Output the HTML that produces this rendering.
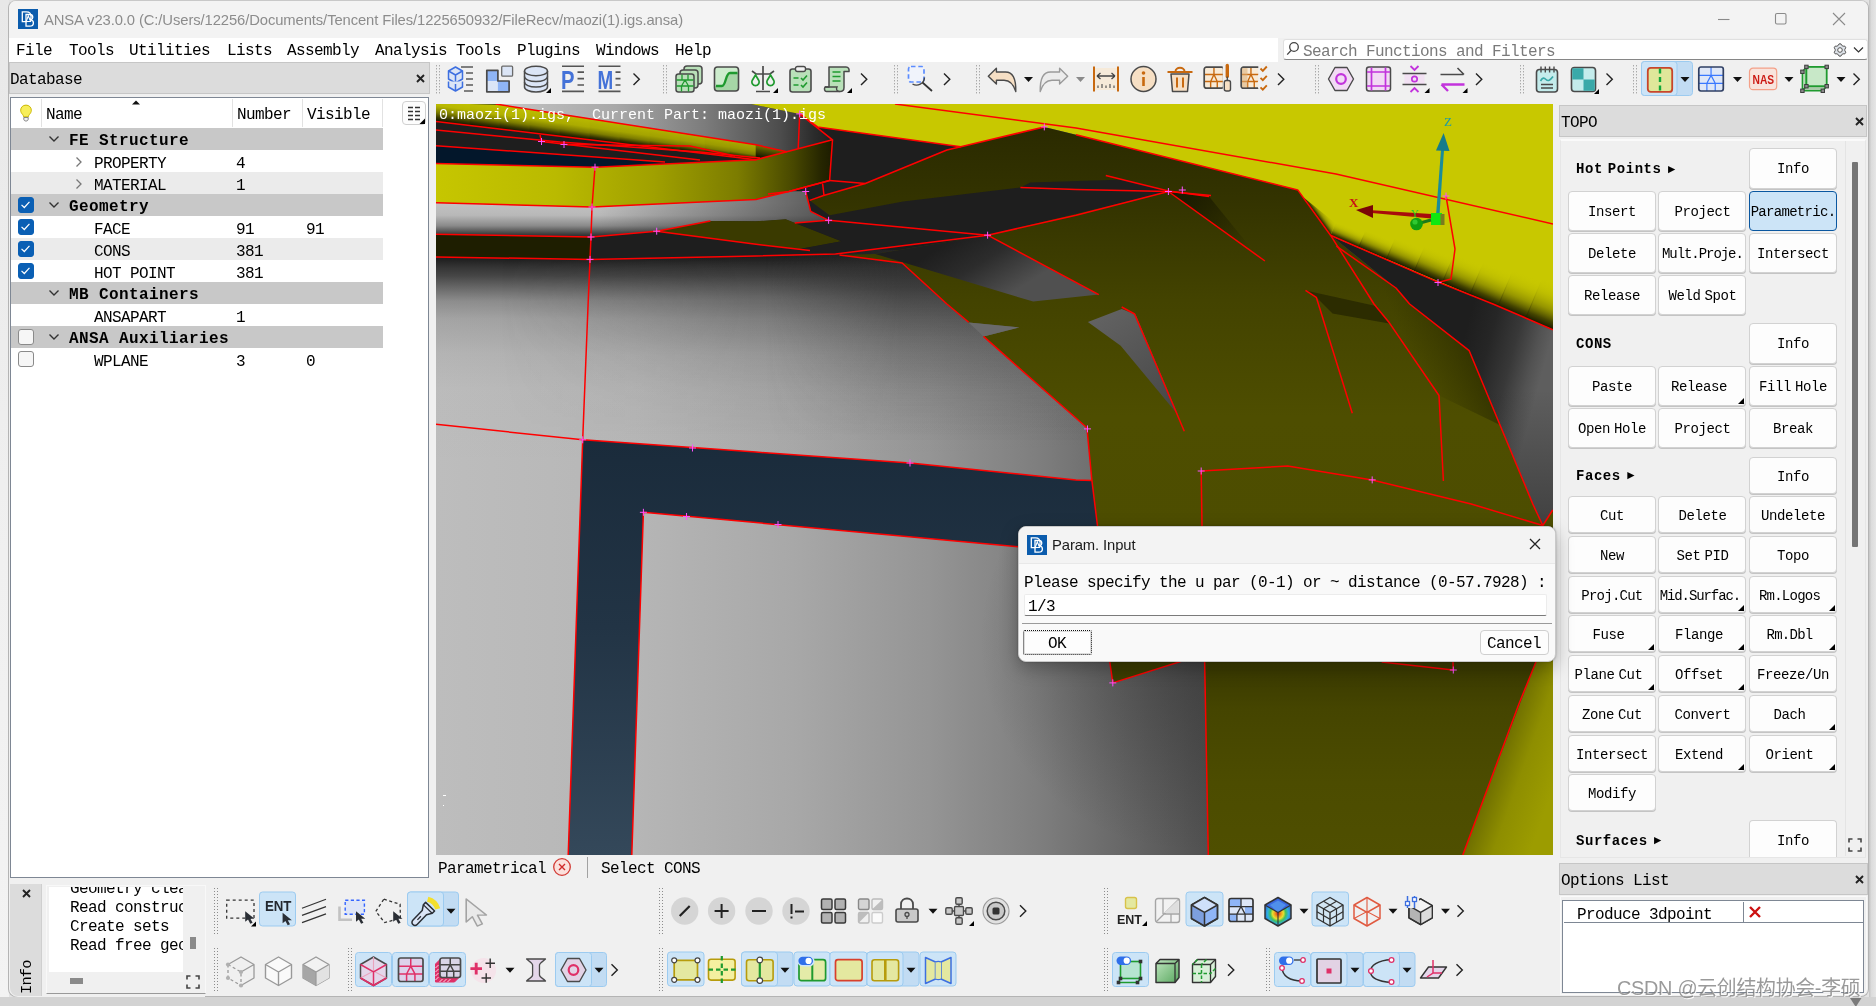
<!DOCTYPE html>
<html><head><meta charset="utf-8"><title>ANSA</title>
<style>
html,body{margin:0;padding:0}
body{width:1876px;height:1006px;overflow:hidden;position:relative;background:#e3e3e3;font-family:"Liberation Mono",monospace;}

.a{position:absolute;box-sizing:border-box}
.t{position:absolute;white-space:pre;color:#000;font-family:"Liberation Mono",monospace}
.m18{font-size:16px;line-height:20px;letter-spacing:-0.6px}
.m16{font-size:14px;line-height:18px;letter-spacing:-0.4px}
.b18{font-size:16px;line-height:20px;letter-spacing:0.4px;font-weight:bold}
.b16{font-size:14px;line-height:18px;letter-spacing:0.55px;font-weight:bold}
.sans{font-family:"Liberation Sans",sans-serif}
.btn{position:absolute;box-sizing:border-box;background:#fdfdfd;border:1px solid #d2d2d2;border-radius:4px;
 text-align:center;white-space:pre;font-family:"Liberation Mono",monospace;font-size:14px;letter-spacing:-0.4px;word-spacing:-4px;color:#000;
 box-shadow:0 1px 0 #c4c4c4}
.hl{position:absolute;box-sizing:border-box;background:#cce4f7;border:1px solid #99c9ef;border-radius:3px}
.cb{position:absolute;box-sizing:border-box;width:16px;height:16px;border-radius:3px}
.cbon{background:#0a5fb4;border:1px solid #0a5fb4}
.cboff{background:#f6f6f6;border:1px solid #8a8a8a}

</style></head><body><div id="root" style="position:absolute;left:0;top:0;width:1876px;height:1006px;will-change:transform">
<div class="a" style="left:0px;top:0px;width:1876px;height:1006px;background:#e3e3e3"></div><div class="a" style="left:0px;top:0px;width:9px;height:1006px;background:linear-gradient(#e8e8e8,#f0f0f0 55%,#f3f3f3)"></div><div class="a" style="left:1869px;top:0px;width:7px;height:1006px;background:linear-gradient(to right,#c4c4c4,#dcdcdc 35%,#e6e6e6)"></div><div class="a" style="left:0px;top:997px;width:1876px;height:9px;background:#d3d3d3"></div><svg class="a" style="left:1849px;top:998px" width="14" height="8"><path d="M1 0h11.5L6.800 9z" fill="#7a7a7a"/></svg><div class="a" style="left:8px;top:0px;width:1861px;height:997px;background:#f0f0f0;border:1px solid #b4b4b4;border-top-color:#c8c8c8;border-radius:8px"></div><div class="a" style="left:9px;top:1px;width:1859px;height:37px;background:#f3f3f3;border-radius:7px 7px 0 0"></div><svg class="a" style="left:18px;top:9px" width="20" height="20" viewBox="0 0 20 20"><rect width="20" height="20" fill="#0b5cad"/><path d="M4.3 2.8h4.2c3 0 4.6 2 4.6 5 0 3.200-1.800 4.800-4.600 4.800H4.300z" fill="none" stroke="#fff" stroke-width="1.3"/><path d="M8 5.5h3.600c2 0 3.200 1 3.200 2.800 0 1.400-.8 2.300-2 2.600 1.600.3 2.600 1.300 2.600 3 0 2-1.500 3.200-3.800 3.200H8z" fill="none" stroke="#fff" stroke-width="1.3"/><path d="M8.200 12.500L10.300 6.800l2.300 5.700z" fill="#0b5cad" stroke="#fff" stroke-width="1.1"/></svg><span class="t sans" style="left:44px;top:9.5px;font-size:14.8px;line-height:20px;color:#8c8c8c;letter-spacing:-0.1px">ANSA v23.0.0 (C:/Users/12256/Documents/Tencent Files/1225650932/FileRecv/maozi(1).igs.ansa)</span><svg class="a" style="left:1700px;top:5px" width="160" height="28" viewBox="1700 5 160 28" fill="none" stroke="#8a8a8a" stroke-width="1.1"><path d="M1718 19.5H1729.5"/><rect x="1775.5" y="13.5" width="10.5" height="10.5" rx="1.5"/><path d="M1833 13L1845 25M1845 13L1833 25"/></svg><div class="a" style="left:9px;top:38px;width:1269px;height:24px;background:#fff"></div><span class="t m18" style="left:16px;top:41px;">File</span><span class="t m18" style="left:69px;top:41px;">Tools</span><span class="t m18" style="left:129px;top:41px;">Utilities</span><span class="t m18" style="left:227px;top:41px;">Lists</span><span class="t m18" style="left:287px;top:41px;">Assembly</span><span class="t m18" style="left:375px;top:41px;">Analysis Tools</span><span class="t m18" style="left:517px;top:41px;">Plugins</span><span class="t m18" style="left:596px;top:41px;">Windows</span><span class="t m18" style="left:675px;top:41px;">Help</span><div class="a" style="left:1278px;top:38px;width:590px;height:24px;background:#f0f0f0"></div><div class="a" style="left:1283px;top:39px;width:585px;height:21px;background:#fff;border:1px solid #e0e0e0;border-bottom:1px solid #868686;border-radius:3px"></div><svg class="a" style="left:1286px;top:41px" width="14" height="16" viewBox="0 0 14 16" fill="none" stroke="#444" stroke-width="1.3"><circle cx="8" cy="6" r="4.3"/><path d="M5 9.5L1.2 13.6"/></svg><span class="t m18" style="left:1303px;top:42px;color:#7a7a7a">Search Functions and Filters</span><svg class="a" style="left:1832px;top:41.5px" width="36" height="16" viewBox="0 0 36 16" fill="none" stroke="#555" stroke-width="1"><path d="M7.03 1.88L8.97 1.88L9.76 3.43L11.08 4.19L12.82 4.10L13.79 5.78L12.84 7.23L12.84 8.77L13.79 10.22L12.82 11.90L11.08 11.81L9.76 12.57L8.97 14.12L7.03 14.12L6.24 12.57L4.92 11.81L3.18 11.90L2.21 10.22L3.16 8.77L3.16 7.23L2.21 5.78L3.18 4.10L4.92 4.19L6.24 3.43z" fill="#dfe4ea" stroke-linejoin="round"/><circle cx="8" cy="8" r="2.300" fill="#fff"/><path d="M22 5.500l4.500 4.500L31 5.500" stroke="#333" stroke-width="1.200"/></svg><div class="a" style="left:9px;top:61.5px;width:421px;height:32px;background:#dcdcdc;border:1px solid #c6c6c6"></div><span class="t m18" style="left:10px;top:70px;">Database</span><svg class="a" style="left:416px;top:74px" width="9" height="9" viewBox="0 0 9 9"><path d="M1 1L8 8M8 1L1 8" stroke="#222" stroke-width="1.9" fill="none"/></svg><div class="a" style="left:10px;top:97px;width:419px;height:781px;background:#fff;border:1px solid #7e8794"></div><div class="a" style="left:11px;top:98px;width:372px;height:30px;background:#fff"></div><div class="a" style="left:41px;top:99px;width:1px;height:28px;background:#e2e2e2"></div><div class="a" style="left:232px;top:99px;width:1px;height:28px;background:#e2e2e2"></div><div class="a" style="left:302px;top:99px;width:1px;height:28px;background:#e2e2e2"></div><div class="a" style="left:382px;top:99px;width:1px;height:28px;background:#e2e2e2"></div><svg class="a" style="left:19px;top:103.5px" width="14" height="19" viewBox="0 0 19 26"><path d="M9.500 1.500c-4.300 0-7.300 3.200-7.300 7 0 2.600 1.300 4.300 2.600 5.800.9 1 1.400 2 1.400 3.200h6.600c0-1.200.5-2.200 1.400-3.200 1.300-1.500 2.600-3.200 2.600-5.800 0-3.800-3-7-7.300-7z" fill="#f7ee5a" stroke="#c8b400" stroke-width="1.3"/><path d="M6.500 18.500h6v2.300c0 1.500-1.200 2.500-3 2.500s-3-1-3-2.500z" fill="#f2f2f2" stroke="#777" stroke-width="1.200"/></svg><span class="t m18" style="left:46px;top:104.5px;">Name</span><svg class="a" style="left:132px;top:100px" width="8" height="5"><path d="M0 4.5L4 0.5L8 4.5z" fill="#111"/></svg><span class="t m18" style="left:237px;top:104.5px;">Number</span><span class="t m18" style="left:307px;top:104.5px;">Visible</span><div class="a" style="left:402px;top:101px;width:24px;height:24px;background:#fdfdfd;border:1px solid #d0d0d0;border-radius:4px"></div><svg class="a" style="left:402px;top:101px" width="24" height="25" viewBox="0 0 24 25"><path d="M6 6.5h5M13 6.5h5M6 10.5h5M13 10.5h5M6 14.5h5M13 14.5h5M6 18.5h5M13 18.5h5" stroke="#333" stroke-width="1.6"/><path d="M23 17.5v5.5h-5.5z" fill="#000"/></svg><div class="a" style="left:11px;top:128px;width:372px;height:21.5px;background:#c8c8c8"></div><svg class="a" style="left:48px;top:135.0px" width="12" height="8" fill="none" stroke="#333" stroke-width="1.4"><path d="M1.5 1.5L6 6l4.5-4.5"/></svg><span class="t b18" style="left:69px;top:131.2px;">FE Structure</span><div class="a" style="left:11px;top:150px;width:372px;height:21.5px;background:#fff"></div><svg class="a" style="left:75px;top:155.5px" width="8" height="12" fill="none" stroke="#777" stroke-width="1.3"><path d="M1.5 1.5L6 6l-4.5 4.5"/></svg><span class="t m18" style="left:94px;top:153.8px;">PROPERTY</span><span class="t m18" style="left:236px;top:153.8px;">4</span><div class="a" style="left:11px;top:172px;width:372px;height:21.5px;background:#ebebeb"></div><svg class="a" style="left:75px;top:177.5px" width="8" height="12" fill="none" stroke="#777" stroke-width="1.3"><path d="M1.5 1.5L6 6l-4.5 4.5"/></svg><span class="t m18" style="left:94px;top:175.8px;">MATERIAL</span><span class="t m18" style="left:236px;top:175.8px;">1</span><div class="a" style="left:11px;top:194px;width:372px;height:21.5px;background:#c8c8c8"></div><svg class="a" style="left:48px;top:201.0px" width="12" height="8" fill="none" stroke="#333" stroke-width="1.4"><path d="M1.5 1.5L6 6l4.5-4.5"/></svg><span class="t b18" style="left:69px;top:197.2px;">Geometry</span><div class="cb cbon" style="left:18px;top:196.8px"><svg width="14" height="14" viewBox="0.5 0.5 15 15" fill="none" stroke="#fff" stroke-width="1.3" style="display:block"><path d="M3.2 7.8l3 2.9 5.5-6"/></svg></div><div class="a" style="left:11px;top:216px;width:372px;height:21.5px;background:#fff"></div><span class="t m18" style="left:94px;top:219.8px;">FACE</span><div class="cb cbon" style="left:18px;top:218.8px"><svg width="14" height="14" viewBox="0.5 0.5 15 15" fill="none" stroke="#fff" stroke-width="1.3" style="display:block"><path d="M3.2 7.8l3 2.9 5.5-6"/></svg></div><span class="t m18" style="left:236px;top:219.8px;">91</span><span class="t m18" style="left:306px;top:219.8px;">91</span><div class="a" style="left:11px;top:238px;width:372px;height:21.5px;background:#ebebeb"></div><span class="t m18" style="left:94px;top:241.8px;">CONS</span><div class="cb cbon" style="left:18px;top:240.8px"><svg width="14" height="14" viewBox="0.5 0.5 15 15" fill="none" stroke="#fff" stroke-width="1.3" style="display:block"><path d="M3.2 7.8l3 2.9 5.5-6"/></svg></div><span class="t m18" style="left:236px;top:241.8px;">381</span><div class="a" style="left:11px;top:260px;width:372px;height:21.5px;background:#fff"></div><span class="t m18" style="left:94px;top:263.8px;">HOT POINT</span><div class="cb cbon" style="left:18px;top:262.8px"><svg width="14" height="14" viewBox="0.5 0.5 15 15" fill="none" stroke="#fff" stroke-width="1.3" style="display:block"><path d="M3.2 7.8l3 2.9 5.5-6"/></svg></div><span class="t m18" style="left:236px;top:263.8px;">381</span><div class="a" style="left:11px;top:282px;width:372px;height:21.5px;background:#c8c8c8"></div><svg class="a" style="left:48px;top:289.0px" width="12" height="8" fill="none" stroke="#333" stroke-width="1.4"><path d="M1.5 1.5L6 6l4.5-4.5"/></svg><span class="t b18" style="left:69px;top:285.2px;">MB Containers</span><div class="a" style="left:11px;top:304px;width:372px;height:21.5px;background:#fff"></div><span class="t m18" style="left:94px;top:307.8px;">ANSAPART</span><span class="t m18" style="left:236px;top:307.8px;">1</span><div class="a" style="left:11px;top:326px;width:372px;height:21.5px;background:#c8c8c8"></div><svg class="a" style="left:48px;top:333.0px" width="12" height="8" fill="none" stroke="#333" stroke-width="1.4"><path d="M1.5 1.5L6 6l4.5-4.5"/></svg><span class="t b18" style="left:69px;top:329.2px;">ANSA Auxiliaries</span><div class="cb cboff" style="left:18px;top:328.8px"></div><div class="a" style="left:11px;top:348px;width:372px;height:21.5px;background:#fff"></div><span class="t m18" style="left:94px;top:351.8px;">WPLANE</span><div class="cb cboff" style="left:18px;top:350.8px"></div><span class="t m18" style="left:236px;top:351.8px;">3</span><span class="t m18" style="left:306px;top:351.8px;">0</span><span class="t m18" style="left:438px;top:859px;">Parametrical</span><svg class="a" style="left:552.1px;top:856.8px" width="20" height="20" viewBox="-1 -1 20 20"><circle cx="9" cy="9" r="8.3" fill="#fbe0dc" stroke="#d23a34" stroke-width="1.3"/><path d="M6 6l6 6M12 6l-6 6" stroke="#d02a2a" stroke-width="1.4"/></svg><div class="a" style="left:586.5px;top:856.5px;width:1px;height:21px;background:#a2a2a2"></div><span class="t m18" style="left:601px;top:859px;">Select CONS</span><div class="a" style="left:1559px;top:104.5px;width:308px;height:32px;background:#dcdcdc;border:1px solid #c6c6c6"></div><span class="t m18" style="left:1561px;top:112.5px;">TOPO</span><svg class="a" style="left:1854.5px;top:116.5px" width="9" height="9" viewBox="0 0 9 9"><path d="M1 1L8 8M8 1L1 8" stroke="#222" stroke-width="1.9" fill="none"/></svg><div class="a" style="left:1560px;top:139px;width:306px;height:719px;background:#f0f0f0;border:1px solid #e6e6e6;border-top:2px solid #fafafa"></div><div class="a" style="left:1845px;top:141px;width:1px;height:715px;background:#e4e4e4"></div><div class="a" style="left:1852px;top:161.5px;width:6px;height:385px;background:#757575;border-radius:1px"></div><svg class="a" style="left:1848px;top:838px" width="14" height="14" viewBox="0 0 14 14" fill="none" stroke="#444" stroke-width="1.6"><path d="M1 4.5V1h3.5M9.5 1H13v3.5M13 9.5V13H9.5M4.5 13H1V9.5"/></svg><span class="t b16" style="left:1576px;top:160.0px;word-spacing:-4px">Hot Points <span style="font-family:'DejaVu Sans',sans-serif;font-weight:normal;font-size:9.5px;line-height:0;letter-spacing:0;position:relative;top:-1.5px;left:1.5px">▶</span></span><div class="btn" style="left:1749px;top:148.0px;width:88px;height:40.5px;line-height:41.5px;">Info</div><div class="btn" style="left:1568px;top:190.5px;width:87.8px;height:40.5px;line-height:41.5px;">Insert</div><div class="btn" style="left:1658.4px;top:190.5px;width:88px;height:40.5px;line-height:41.5px;">Project</div><div class="btn" style="left:1749px;top:190.5px;width:88px;height:40.5px;line-height:41.5px;letter-spacing:-0.7px;background:#cce4f7;border:1px solid #0a57a0;box-shadow:none;">Parametric.</div><div class="btn" style="left:1568px;top:232.5px;width:87.8px;height:40.5px;line-height:41.5px;">Delete</div><div class="btn" style="left:1658.4px;top:232.5px;width:88px;height:40.5px;line-height:41.5px;letter-spacing:-1.05px;">Mult.Proje.</div><div class="btn" style="left:1749px;top:232.5px;width:88px;height:40.5px;line-height:41.5px;">Intersect</div><div class="btn" style="left:1568px;top:274.5px;width:87.8px;height:40.5px;line-height:41.5px;">Release</div><div class="btn" style="left:1658.4px;top:274.5px;width:88px;height:40.5px;line-height:41.5px;">Weld Spot</div><span class="t b16" style="left:1576px;top:335.0px;word-spacing:-4px">CONS</span><div class="btn" style="left:1749px;top:323.0px;width:88px;height:40.5px;line-height:41.5px;">Info</div><div class="btn" style="left:1568px;top:365.5px;width:87.8px;height:40.5px;line-height:41.5px;">Paste</div><div class="btn" style="left:1658.4px;top:365.5px;width:88px;height:40.5px;line-height:41.5px;padding-right:7px;">Release<svg style="position:absolute;right:1px;bottom:1px" width="6" height="6"><path d="M6 0v6H0z" fill="#000"/></svg></div><div class="btn" style="left:1749px;top:365.5px;width:88px;height:40.5px;line-height:41.5px;">Fill Hole</div><div class="btn" style="left:1568px;top:407.5px;width:87.8px;height:40.5px;line-height:41.5px;">Open Hole</div><div class="btn" style="left:1658.4px;top:407.5px;width:88px;height:40.5px;line-height:41.5px;">Project</div><div class="btn" style="left:1749px;top:407.5px;width:88px;height:40.5px;line-height:41.5px;">Break</div><span class="t b16" style="left:1576px;top:466.75px;word-spacing:-4px">Faces <span style="font-family:'DejaVu Sans',sans-serif;font-weight:normal;font-size:9.5px;line-height:0;letter-spacing:0;position:relative;top:-1.5px;left:1.5px">▶</span></span><div class="btn" style="left:1749px;top:456.5px;width:88px;height:37.0px;line-height:38.0px;">Info</div><div class="btn" style="left:1568px;top:496.2px;width:87.8px;height:37.1px;line-height:38.1px;">Cut</div><div class="btn" style="left:1658.4px;top:496.2px;width:88px;height:37.1px;line-height:38.1px;">Delete</div><div class="btn" style="left:1749px;top:496.2px;width:88px;height:37.1px;line-height:38.1px;">Undelete</div><div class="btn" style="left:1568px;top:535.9px;width:87.8px;height:37.1px;line-height:38.1px;">New</div><div class="btn" style="left:1658.4px;top:535.9px;width:88px;height:37.1px;line-height:38.1px;">Set PID</div><div class="btn" style="left:1749px;top:535.9px;width:88px;height:37.1px;line-height:38.1px;">Topo</div><div class="btn" style="left:1568px;top:575.6px;width:87.8px;height:37.1px;line-height:38.1px;letter-spacing:-0.75px;">Proj.Cut</div><div class="btn" style="left:1658.4px;top:575.6px;width:88px;height:37.1px;line-height:38.1px;padding-right:7px;letter-spacing:-1.1px;padding-right:5px;">Mid.Surfac.<svg style="position:absolute;right:1px;bottom:1px" width="6" height="6"><path d="M6 0v6H0z" fill="#000"/></svg></div><div class="btn" style="left:1749px;top:575.6px;width:88px;height:37.1px;line-height:38.1px;padding-right:7px;letter-spacing:-0.75px;">Rm.Logos<svg style="position:absolute;right:1px;bottom:1px" width="6" height="6"><path d="M6 0v6H0z" fill="#000"/></svg></div><div class="btn" style="left:1568px;top:615.4px;width:87.8px;height:37.1px;line-height:38.1px;padding-right:7px;">Fuse<svg style="position:absolute;right:1px;bottom:1px" width="6" height="6"><path d="M6 0v6H0z" fill="#000"/></svg></div><div class="btn" style="left:1658.4px;top:615.4px;width:88px;height:37.1px;line-height:38.1px;padding-right:7px;">Flange<svg style="position:absolute;right:1px;bottom:1px" width="6" height="6"><path d="M6 0v6H0z" fill="#000"/></svg></div><div class="btn" style="left:1749px;top:615.4px;width:88px;height:37.1px;line-height:38.1px;padding-right:7px;letter-spacing:-0.75px;">Rm.Dbl<svg style="position:absolute;right:1px;bottom:1px" width="6" height="6"><path d="M6 0v6H0z" fill="#000"/></svg></div><div class="btn" style="left:1568px;top:655.1px;width:87.8px;height:37.1px;line-height:38.1px;padding-right:7px;">Plane Cut<svg style="position:absolute;right:1px;bottom:1px" width="6" height="6"><path d="M6 0v6H0z" fill="#000"/></svg></div><div class="btn" style="left:1658.4px;top:655.1px;width:88px;height:37.1px;line-height:38.1px;padding-right:7px;">Offset<svg style="position:absolute;right:1px;bottom:1px" width="6" height="6"><path d="M6 0v6H0z" fill="#000"/></svg></div><div class="btn" style="left:1749px;top:655.1px;width:88px;height:37.1px;line-height:38.1px;">Freeze/Un</div><div class="btn" style="left:1568px;top:694.8px;width:87.8px;height:37.1px;line-height:38.1px;">Zone Cut</div><div class="btn" style="left:1658.4px;top:694.8px;width:88px;height:37.1px;line-height:38.1px;">Convert</div><div class="btn" style="left:1749px;top:694.8px;width:88px;height:37.1px;line-height:38.1px;padding-right:7px;">Dach<svg style="position:absolute;right:1px;bottom:1px" width="6" height="6"><path d="M6 0v6H0z" fill="#000"/></svg></div><div class="btn" style="left:1568px;top:734.5px;width:87.8px;height:37.1px;line-height:38.1px;">Intersect</div><div class="btn" style="left:1658.4px;top:734.5px;width:88px;height:37.1px;line-height:38.1px;padding-right:7px;">Extend<svg style="position:absolute;right:1px;bottom:1px" width="6" height="6"><path d="M6 0v6H0z" fill="#000"/></svg></div><div class="btn" style="left:1749px;top:734.5px;width:88px;height:37.1px;line-height:38.1px;padding-right:7px;">Orient<svg style="position:absolute;right:1px;bottom:1px" width="6" height="6"><path d="M6 0v6H0z" fill="#000"/></svg></div><div class="btn" style="left:1568px;top:774.2px;width:87.8px;height:37.1px;line-height:38.1px;">Modify</div><span class="t b16" style="left:1576px;top:831.75px;word-spacing:-4px">Surfaces <span style="font-family:'DejaVu Sans',sans-serif;font-weight:normal;font-size:9.5px;line-height:0;letter-spacing:0;position:relative;top:-1.5px;left:1.5px">▶</span></span><div class="a" style="left:1749px;top:819.5px;width:88px;height:37px;background:#fdfdfd;border:1px solid #d2d2d2;border-bottom:none;border-radius:4px 4px 0 0;text-align:center;line-height:40px;font-size:14px;letter-spacing:-0.4px">Info</div><div class="a" style="left:1559px;top:862.5px;width:309px;height:32px;background:#dcdcdc;border:1px solid #c6c6c6"></div><span class="t m18" style="left:1561px;top:871px;">Options List</span><svg class="a" style="left:1854.5px;top:874.5px" width="9" height="9" viewBox="0 0 9 9"><path d="M1 1L8 8M8 1L1 8" stroke="#222" stroke-width="1.9" fill="none"/></svg><div class="a" style="left:1560px;top:896px;width:307px;height:99px;background:#f0f0f0;border:1px solid #fafafa;border-radius:0 0 7px 0"></div><div class="a" style="left:1562px;top:900.2px;width:302px;height:92.5px;background:#fff;border:1px solid #7e8794"></div><div class="a" style="left:1563.5px;top:921.5px;width:299px;height:1px;background:#7e8794"></div><div class="a" style="left:1742.5px;top:901.5px;width:1px;height:20px;background:#7e8794"></div><span class="t m18" style="left:1577px;top:904.5px;">Produce 3dpoint</span><svg class="a" style="left:1749px;top:906px" width="12" height="12" viewBox="0 0 12 12"><path d="M1 1L11 11M11 1L1 11" stroke="#cc1111" stroke-width="2.4" fill="none"/></svg><span class="t" style="left:1617px;top:973.5px;font-family:'Liberation Sans','Noto Sans CJK SC',sans-serif;font-size:19.9px;line-height:28px;color:rgba(120,120,120,0.75);letter-spacing:-0.3px;text-shadow:1px 1px 0 rgba(255,255,255,0.9)">CSDN @云创结构协会-李硕</span><div class="a" style="left:10px;top:884px;width:195px;height:113px;background:#f0f0f0;border-radius:0 0 0 8px"></div><div class="a" style="left:10px;top:884px;width:32px;height:112px;background:#dcdcdc;border-radius:0 0 0 8px;border-right:1px solid #cfcfcf"></div><svg class="a" style="left:21.5px;top:889px" width="9" height="9" viewBox="0 0 9 9"><path d="M1 1L8 8M8 1L1 8" stroke="#222" stroke-width="1.9" fill="none"/></svg><span class="t m18" style="left:16.5px;top:993.5px;transform-origin:0 0;transform:rotate(-90deg);font-size:15.5px;letter-spacing:-0.9px">Info</span><div class="a" style="left:46px;top:885px;width:160px;height:109px;background:#f0f0f0;border:1px solid #f8f8f8;border-bottom:1px solid #999"></div><div class="a" style="left:49px;top:887px;width:133.5px;height:85px;background:#fff;overflow:hidden"><span class="t m18" style="left:21px;top:-7px;line-height:19px">Geometry clea
Read construc
Create sets
Read free geo</span></div><div class="a" style="left:190px;top:937px;width:6px;height:12px;background:#8a8a8a"></div><div class="a" style="left:70px;top:978px;width:13px;height:6px;background:#8a8a8a"></div><svg class="a" style="left:186px;top:975px" width="14" height="14" viewBox="0 0 14 14" fill="none" stroke="#444" stroke-width="1.6"><path d="M1 4.5V1h3.5M9.5 1H13v3.5M13 9.5V13H9.5M4.5 13H1V9.5"/></svg><svg class="a" style="left:0;top:0" width="1876" height="1006" viewBox="0 0 1876 1006"><g fill="#8c8c8c"><rect x="436.0" y="65.3" width="1" height="1"/><rect x="439.0" y="65.3" width="1" height="1"/><rect x="436.0" y="68.3" width="1" height="1"/><rect x="439.0" y="68.3" width="1" height="1"/><rect x="436.0" y="71.3" width="1" height="1"/><rect x="439.0" y="71.3" width="1" height="1"/><rect x="436.0" y="74.3" width="1" height="1"/><rect x="439.0" y="74.3" width="1" height="1"/><rect x="436.0" y="77.3" width="1" height="1"/><rect x="439.0" y="77.3" width="1" height="1"/><rect x="436.0" y="80.3" width="1" height="1"/><rect x="439.0" y="80.3" width="1" height="1"/><rect x="436.0" y="83.3" width="1" height="1"/><rect x="439.0" y="83.3" width="1" height="1"/><rect x="436.0" y="86.3" width="1" height="1"/><rect x="439.0" y="86.3" width="1" height="1"/><rect x="436.0" y="89.3" width="1" height="1"/><rect x="439.0" y="89.3" width="1" height="1"/><rect x="436.0" y="92.3" width="1" height="1"/><rect x="439.0" y="92.3" width="1" height="1"/></g><g transform="translate(447.0 65.0)"><g fill="#dbe5f6" stroke="#3d6fe0" stroke-width="1.500" stroke-linejoin="round"><path d="M1.500 6L8.500 2l7 4v8l-7 4-7-4z"/><path d="M1.500 6l7 4 7-4M8.500 10v8" fill="none"/><path d="M1.500 16.500v5.500l7 4 7-4v-5.500" /><path d="M8.500 19v7" fill="none"/></g><path d="M14 2h12M19 8h7M19 14h7M19 20h7M17 26h9" stroke="#5a5a5a" stroke-width="1.700" fill="none"/></g><g transform="translate(486.0 65.0)"><rect x="15.700" y="1.200" width="10.900" height="10" rx="1" fill="#dbe5f6" stroke="#6a6a6a" stroke-width="1.300"/><path d="M.800 5.300h11.100v10.700h11.200v10.800H.800z" fill="#dbe5f6"/><rect x=".800" y="5.300" width="11.100" height="10.700" fill="#8fb5f6"/><rect x="11.900" y="16" width="11.200" height="10.800" fill="#8fb5f6"/><path d="M.800 5.300h11.100v10.700h11.200v10.800H.800z" fill="none" stroke="#4a4a4a" stroke-width="1.700" stroke-linejoin="round"/></g><g transform="translate(523.0 65.0)"><path d="M1.500 6v16c0 2.800 5 5 11.500 5s11.500-2.200 11.500-5V6" fill="#dbe5f6" stroke="#4a4a4a" stroke-width="1.500"/><ellipse cx="13" cy="6" rx="11.500" ry="4.800" fill="#dbe5f6" stroke="#4a4a4a" stroke-width="1.500"/><path d="M1.500 11.500c0 2.800 5 5 11.500 5s11.500-2.200 11.500-5M1.500 17c0 2.800 5 5 11.500 5s11.500-2.200 11.500-5" fill="none" stroke="#4a4a4a" stroke-width="1.400"/><path d="M28 23v5h-5z" fill="#000"/></g><g transform="translate(560.5 65.0)"><text x="0.500" y="23.600" font-family="Liberation Sans,sans-serif" font-weight="bold" font-size="25" fill="#4472d8" textLength="13.5" lengthAdjust="spacingAndGlyphs">P</text><path d="M1.500 1.200h22M17 7.100h6.5M17 13.600h6.5M17 20h6.5M1.500 26.400h22" stroke="#555" stroke-width="1.600" fill="none"/></g><g transform="translate(597.0 65.0)"><text x="0.500" y="23.600" font-family="Liberation Sans,sans-serif" font-weight="bold" font-size="25" fill="#4472d8" textLength="15.7" lengthAdjust="spacingAndGlyphs">M</text><path d="M1.500 1.200h22M18.5 7.100h5.0M18.5 13.600h5.0M18.5 20h5.0M1.500 26.400h22" stroke="#555" stroke-width="1.600" fill="none"/></g><path d="M633.5 73.5l5.800 5.800l-5.800 5.800" fill="none" stroke="#222" stroke-width="1.400"/><g fill="#8c8c8c"><rect x="663.0" y="65.3" width="1" height="1"/><rect x="666.0" y="65.3" width="1" height="1"/><rect x="663.0" y="68.3" width="1" height="1"/><rect x="666.0" y="68.3" width="1" height="1"/><rect x="663.0" y="71.3" width="1" height="1"/><rect x="666.0" y="71.3" width="1" height="1"/><rect x="663.0" y="74.3" width="1" height="1"/><rect x="666.0" y="74.3" width="1" height="1"/><rect x="663.0" y="77.3" width="1" height="1"/><rect x="666.0" y="77.3" width="1" height="1"/><rect x="663.0" y="80.3" width="1" height="1"/><rect x="666.0" y="80.3" width="1" height="1"/><rect x="663.0" y="83.3" width="1" height="1"/><rect x="666.0" y="83.3" width="1" height="1"/><rect x="663.0" y="86.3" width="1" height="1"/><rect x="666.0" y="86.3" width="1" height="1"/><rect x="663.0" y="89.3" width="1" height="1"/><rect x="666.0" y="89.3" width="1" height="1"/><rect x="663.0" y="92.3" width="1" height="1"/><rect x="666.0" y="92.3" width="1" height="1"/></g><g transform="translate(675.0 65.0)"><rect x="9" y="1" width="18" height="18" rx="3" fill="#b9e0b9" stroke="#4a4a4a" stroke-width="1.500"/><rect x="5" y="5" width="18" height="18" rx="3" fill="#b9e0b9" stroke="#4a4a4a" stroke-width="1.500"/><rect x="1" y="9" width="18" height="18" rx="2.500" fill="#b9e0b9" stroke="#4a4a4a" stroke-width="1.500"/><path d="M1.500 15h17M1.500 21h17M7 9.500v5.500M13 9.500v5.500M10 15l-3.500 6M10 15l3.500 6M6.500 21v5.500M13.500 21v5.500" stroke="#1f9a2f" stroke-width="1.300" fill="none"/></g><g transform="translate(713.0 65.0)"><rect x="1.500" y="2" width="24" height="24" rx="3" fill="#cdeccd"/><path d="M2 21h7c4 0 3.500-13 8-13h8.500v15a3 3 0 0 1-3 3h-17.500a3 3 0 0 1-3-3z" fill="#a6d6a6"/><rect x="1.500" y="2" width="24" height="24" rx="3" fill="none" stroke="#4a4a4a" stroke-width="1.600"/><path d="M3 21h6c4 0 3.500-13 8-13h7.500" fill="none" stroke="#1f9a2f" stroke-width="2.400"/></g><g transform="translate(749.0 65.0)"><path d="M14 1v24M7 26.500h14M3 6l4 3h14l4-3" fill="none" stroke="#4a4a4a" stroke-width="1.700"/><path d="M6.500 10l-3.300 5.500a3.600 3.600 0 1 0 6.600 0zM21.500 10l-3.300 5.500a3.600 3.600 0 1 0 6.600 0z" fill="none" stroke="#1f9a2f" stroke-width="1.700"/><path d="M29 23v5h-5z" fill="#000"/></g><g transform="translate(787.0 65.0)"><rect x="3" y="4" width="21" height="23" rx="2.500" fill="#b9e0b9" stroke="#4a4a4a" stroke-width="1.600"/><rect x="8.500" y="1.500" width="10" height="5" rx="2" fill="#f4f4f4" stroke="#4a4a4a" stroke-width="1.400"/><path d="M6.500 13h5M6.500 20h5M14 13l2 2 4-4.500M14 20l2 2 4-4.500" fill="none" stroke="#1f9a2f" stroke-width="1.600"/></g><g transform="translate(823.0 65.0)"><path d="M6 2h17c2.500 0 3.500 2 3 4.500H21v16c0 2.500-1.500 4-4 4H3.500C1.500 26.500 1 24 2 22h4z" fill="#b9e0b9" stroke="#4a4a4a" stroke-width="1.500" stroke-linejoin="round"/><path d="M2 22h12c-1 2-.5 4.500 2.500 4.500" fill="none" stroke="#4a4a4a" stroke-width="1.400"/><path d="M9.500 7h8M9.500 11.500h8M9.500 16h8" stroke="#1f9a2f" stroke-width="1.600" fill="none"/><path d="M29 23v5h-5z" fill="#000"/></g><path d="M861.0 73.5l5.800 5.800l-5.800 5.800" fill="none" stroke="#222" stroke-width="1.400"/><g fill="#8c8c8c"><rect x="894.0" y="65.3" width="1" height="1"/><rect x="897.0" y="65.3" width="1" height="1"/><rect x="894.0" y="68.3" width="1" height="1"/><rect x="897.0" y="68.3" width="1" height="1"/><rect x="894.0" y="71.3" width="1" height="1"/><rect x="897.0" y="71.3" width="1" height="1"/><rect x="894.0" y="74.3" width="1" height="1"/><rect x="897.0" y="74.3" width="1" height="1"/><rect x="894.0" y="77.3" width="1" height="1"/><rect x="897.0" y="77.3" width="1" height="1"/><rect x="894.0" y="80.3" width="1" height="1"/><rect x="897.0" y="80.3" width="1" height="1"/><rect x="894.0" y="83.3" width="1" height="1"/><rect x="897.0" y="83.3" width="1" height="1"/><rect x="894.0" y="86.3" width="1" height="1"/><rect x="897.0" y="86.3" width="1" height="1"/><rect x="894.0" y="89.3" width="1" height="1"/><rect x="897.0" y="89.3" width="1" height="1"/><rect x="894.0" y="92.3" width="1" height="1"/><rect x="897.0" y="92.3" width="1" height="1"/></g><g transform="translate(907.0 65.0)"><rect x="1.500" y="1.500" width="15.500" height="15.500" rx="2.500" fill="#f0f3fb" stroke="#5b8cff" stroke-width="1.700" stroke-dasharray="4.500 2.800"/><path d="M17.500 12.500a8 8 0 0 1-12 6.500" fill="none" stroke="#444" stroke-width="1.400"/><path d="M15.500 17.500l9.500 8.500" stroke="#333" stroke-width="1.700"/></g><path d="M944.0 73.5l5.800 5.800l-5.800 5.800" fill="none" stroke="#222" stroke-width="1.400"/><g fill="#8c8c8c"><rect x="976.0" y="65.3" width="1" height="1"/><rect x="979.0" y="65.3" width="1" height="1"/><rect x="976.0" y="68.3" width="1" height="1"/><rect x="979.0" y="68.3" width="1" height="1"/><rect x="976.0" y="71.3" width="1" height="1"/><rect x="979.0" y="71.3" width="1" height="1"/><rect x="976.0" y="74.3" width="1" height="1"/><rect x="979.0" y="74.3" width="1" height="1"/><rect x="976.0" y="77.3" width="1" height="1"/><rect x="979.0" y="77.3" width="1" height="1"/><rect x="976.0" y="80.3" width="1" height="1"/><rect x="979.0" y="80.3" width="1" height="1"/><rect x="976.0" y="83.3" width="1" height="1"/><rect x="979.0" y="83.3" width="1" height="1"/><rect x="976.0" y="86.3" width="1" height="1"/><rect x="979.0" y="86.3" width="1" height="1"/><rect x="976.0" y="89.3" width="1" height="1"/><rect x="979.0" y="89.3" width="1" height="1"/><rect x="976.0" y="92.3" width="1" height="1"/><rect x="979.0" y="92.3" width="1" height="1"/></g><g transform="translate(988.0 66.0)"><path d="M8.400 2.200L.300 10.200l8.100 7.700v-3.700h7.600c5.500 0 9.500 3.800 11.800 11.400C28 12 24.500 6 17.500 6H8.400z" fill="#f6dfc4" stroke="#4a4a4a" stroke-width="1.400" stroke-linejoin="round"/></g><path d="M1024.0 77.1h9l-4.500 5z" fill="#111"/><g transform="translate(1040.0 66.0)"><g transform="translate(28 0) scale(-1 1)"><path d="M8.400 2.200L.300 10.200l8.100 7.700v-3.700h7.600c5.500 0 9.500 3.800 11.800 11.400C28 12 24.500 6 17.500 6H8.400z" fill="#ececec" stroke="#9a9a9a" stroke-width="1.400" stroke-linejoin="round"/></g></g><path d="M1076.0 77.1h9l-4.500 5z" fill="#8a8a8a"/><g transform="translate(1092.0 65.0)"><rect x="2" y="3" width="24" height="22" fill="#f6ead9"/><path d="M2 1.500v25M26 1.500v25" stroke="#c8690f" stroke-width="2" fill="none"/><path d="M5 11h18M5 11l3.500-3M5 11l3.500 3M23 11l-3.500-3M23 11l-3.500 3" stroke="#444" stroke-width="1.300" fill="none"/><path d="M6 23v-2.500M10 23v-4M14 23v-2.500M18 23v-4M22 23v-2.500" stroke="#555" stroke-width="1.200"/></g><g transform="translate(1129.5 65.0)"><circle cx="14" cy="14" r="12.500" fill="#f6dfc4" stroke="#4a4a4a" stroke-width="1.500"/><circle cx="14" cy="8" r="1.800" fill="#c8690f"/><path d="M14 12v9" stroke="#c8690f" stroke-width="2.600"/></g><g transform="translate(1166.0 65.0)"><path d="M5 9h18l-1.500 17.500h-15z" fill="#f6dfc4" stroke="#4a4a4a" stroke-width="1.500" stroke-linejoin="round"/><path d="M1.500 7h25" stroke="#c8690f" stroke-width="2"/><path d="M9.500 6.500c0-5 9-5 9 0" fill="none" stroke="#c8690f" stroke-width="2"/><path d="M11 12.500v10M17 12.500v10" stroke="#c8690f" stroke-width="2"/></g><g transform="translate(1203.0 65.0)"><rect x="1.2" y="2.2" width="19.5" height="21" rx="2.200" fill="#f8ead6"/><path d="M1.2 9.55H20.7M1.2 16.48H20.7M10.95 2.2V9.55M10.95 9.55L7.64 16.48M10.95 9.55L14.27 16.48M7.64 16.48V23.2M14.27 16.48V23.2" stroke="#c8690f" stroke-width="1.4" fill="none"/><rect x="1.2" y="2.2" width="19.5" height="21" rx="2.200" fill="none" stroke="#4a4a4a" stroke-width="1.700"/><rect x="19.800" y="1" width="9" height="27" fill="#f0f0f0"/><path d="M24.300 .5v11" stroke="#c8690f" stroke-width="3.400" stroke-linecap="round"/><path d="M24.300 11.500v4" stroke="#4a4a4a" stroke-width="1.300"/><rect x="21.300" y="15.500" width="6.200" height="10.500" rx="2" fill="#f6dfc4" stroke="#4a4a4a" stroke-width="1.400"/></g><g transform="translate(1240.0 65.0)"><rect x="1.2" y="2.2" width="19.5" height="21" rx="2.200" fill="#f8ead6"/><path d="M1.2 9.55H20.7M1.2 16.48H20.7M10.95 2.2V9.55M10.95 9.55L7.64 16.48M10.95 9.55L14.27 16.48M7.64 16.48V23.2M14.27 16.48V23.2" stroke="#c8690f" stroke-width="1.4" fill="none"/><rect x="1.2" y="2.2" width="19.5" height="21" rx="2.200" fill="none" stroke="#4a4a4a" stroke-width="1.700"/><rect x="2" y="3" width="5.500" height="19.400" fill="#dcae78" opacity=".55"/><rect x="18.300" y="0" width="11" height="28" fill="#f0f0f0"/><path d="M20.700 2.200l-2 3 2 3-2 3 2 3-2 3 2 3-2 3" fill="none" stroke="#f0f0f0" stroke-width="2"/><path d="M20.500 3.500l2.300 2.300 4-4.300M20.500 12.800l2.300 2.300 4-4.300M20.500 22.300l2.300 2.300 4-4.300" fill="none" stroke="#c8690f" stroke-width="1.900"/></g><path d="M1278.0 73.5l5.800 5.800l-5.800 5.800" fill="none" stroke="#222" stroke-width="1.400"/><g fill="#8c8c8c"><rect x="1315.0" y="65.3" width="1" height="1"/><rect x="1318.0" y="65.3" width="1" height="1"/><rect x="1315.0" y="68.3" width="1" height="1"/><rect x="1318.0" y="68.3" width="1" height="1"/><rect x="1315.0" y="71.3" width="1" height="1"/><rect x="1318.0" y="71.3" width="1" height="1"/><rect x="1315.0" y="74.3" width="1" height="1"/><rect x="1318.0" y="74.3" width="1" height="1"/><rect x="1315.0" y="77.3" width="1" height="1"/><rect x="1318.0" y="77.3" width="1" height="1"/><rect x="1315.0" y="80.3" width="1" height="1"/><rect x="1318.0" y="80.3" width="1" height="1"/><rect x="1315.0" y="83.3" width="1" height="1"/><rect x="1318.0" y="83.3" width="1" height="1"/><rect x="1315.0" y="86.3" width="1" height="1"/><rect x="1318.0" y="86.3" width="1" height="1"/><rect x="1315.0" y="89.3" width="1" height="1"/><rect x="1318.0" y="89.3" width="1" height="1"/><rect x="1315.0" y="92.3" width="1" height="1"/><rect x="1318.0" y="92.3" width="1" height="1"/></g><g transform="translate(1327.0 65.0)"><path d="M1.500 14L8 2.500h12L26.500 14 20 25.500H8z" fill="#f2daf4" stroke="#4a4a4a" stroke-width="1.400" stroke-linejoin="round"/><circle cx="14" cy="14" r="4.800" fill="none" stroke="#c233dc" stroke-width="2.200"/></g><g transform="translate(1364.5 65.0)"><rect x="2" y="2" width="24" height="24" rx="2.500" fill="#f2daf4" stroke="#4a4a4a" stroke-width="1.500"/><path d="M2.500 7h23M2.500 21h23M7 2.500v23M21 2.500v23" stroke="#c233dc" stroke-width="1.700" fill="none"/></g><g transform="translate(1401.5 65.0)"><rect x="3" y="8" width="20" height="12" fill="#f2daf4" opacity=".7"/><path d="M1 8.500h24M1 19.500h24" stroke="#4a4a4a" stroke-width="1.500"/><path d="M9 1l4 4 4-4M9 27l4-4 4 4" fill="none" stroke="#c233dc" stroke-width="1.800"/><circle cx="13" cy="14" r="2.700" fill="none" stroke="#c233dc" stroke-width="1.700"/><path d="M28 23v5h-5z" fill="#000"/></g><g transform="translate(1438.5 65.0)"><path d="M2 9.500h23M19 3l6.500 6.500" fill="none" stroke="#4a4a4a" stroke-width="1.600"/><path d="M26 19.500H3M9.500 26L3 19.500" fill="none" stroke="#c233dc" stroke-width="2.400"/><path d="M29 23v5h-5z" fill="#000"/></g><path d="M1476.0 73.5l5.800 5.800l-5.800 5.800" fill="none" stroke="#222" stroke-width="1.400"/><g fill="#8c8c8c"><rect x="1520.0" y="65.3" width="1" height="1"/><rect x="1523.0" y="65.3" width="1" height="1"/><rect x="1520.0" y="68.3" width="1" height="1"/><rect x="1523.0" y="68.3" width="1" height="1"/><rect x="1520.0" y="71.3" width="1" height="1"/><rect x="1523.0" y="71.3" width="1" height="1"/><rect x="1520.0" y="74.3" width="1" height="1"/><rect x="1523.0" y="74.3" width="1" height="1"/><rect x="1520.0" y="77.3" width="1" height="1"/><rect x="1523.0" y="77.3" width="1" height="1"/><rect x="1520.0" y="80.3" width="1" height="1"/><rect x="1523.0" y="80.3" width="1" height="1"/><rect x="1520.0" y="83.3" width="1" height="1"/><rect x="1523.0" y="83.3" width="1" height="1"/><rect x="1520.0" y="86.3" width="1" height="1"/><rect x="1523.0" y="86.3" width="1" height="1"/><rect x="1520.0" y="89.3" width="1" height="1"/><rect x="1523.0" y="89.3" width="1" height="1"/><rect x="1520.0" y="92.3" width="1" height="1"/><rect x="1523.0" y="92.3" width="1" height="1"/></g><g transform="translate(1534.0 65.0)"><rect x="2.500" y="4.500" width="21" height="22.500" rx="3" fill="#c4ecec" stroke="#4a4a4a" stroke-width="1.600"/><path d="M7 1.500v6M11.300 1.500v6M15.600 1.500v6M20 1.500v6" stroke="#4a4a4a" stroke-width="1.400"/><path d="M6.500 16c2-3.500 3.500-3.500 5.500-1.500s4 1 7-3" fill="none" stroke="#3aa9a9" stroke-width="1.700"/><path d="M7 19.500h12M7 23h12" stroke="#4a4a4a" stroke-width="1.400"/></g><g transform="translate(1570.0 66.0)"><rect x="1.500" y="1.500" width="24" height="24" rx="3" fill="#c4ecec" stroke="#4a4a4a" stroke-width="1.600"/><path d="M2.300 2.300h11.200v11.200H2.300zM13.500 13.500h11.200v11.200H13.500z" fill="#3aa9a9"/><path d="M29 23v5h-5z" fill="#000"/></g><path d="M1606.5 73.5l5.800 5.800l-5.800 5.800" fill="none" stroke="#222" stroke-width="1.400"/><g fill="#8c8c8c"><rect x="1633.0" y="65.3" width="1" height="1"/><rect x="1636.0" y="65.3" width="1" height="1"/><rect x="1633.0" y="68.3" width="1" height="1"/><rect x="1636.0" y="68.3" width="1" height="1"/><rect x="1633.0" y="71.3" width="1" height="1"/><rect x="1636.0" y="71.3" width="1" height="1"/><rect x="1633.0" y="74.3" width="1" height="1"/><rect x="1636.0" y="74.3" width="1" height="1"/><rect x="1633.0" y="77.3" width="1" height="1"/><rect x="1636.0" y="77.3" width="1" height="1"/><rect x="1633.0" y="80.3" width="1" height="1"/><rect x="1636.0" y="80.3" width="1" height="1"/><rect x="1633.0" y="83.3" width="1" height="1"/><rect x="1636.0" y="83.3" width="1" height="1"/><rect x="1633.0" y="86.3" width="1" height="1"/><rect x="1636.0" y="86.3" width="1" height="1"/><rect x="1633.0" y="89.3" width="1" height="1"/><rect x="1636.0" y="89.3" width="1" height="1"/><rect x="1633.0" y="92.3" width="1" height="1"/><rect x="1636.0" y="92.3" width="1" height="1"/></g><rect x="1641.5" y="61.5" width="51.0" height="34.0" rx="3" fill="#c2dcf3" stroke="#9ccbf0"/><rect x="1641.5" y="61.5" width="35.5" height="34.0" rx="3" fill="#cce4f7" stroke="#9ccbf0"/><g transform="translate(1646.5 65.0)"><rect x="1.300" y="2.900" width="24.400" height="24" rx="3" fill="#dfe79a" stroke="#c8452a" stroke-width="1.800"/><path d="M13.500 3.500v23" stroke="#12a83a" stroke-width="2.400" stroke-dasharray="5 3.500"/></g><path d="M1680.5 77.1h9l-4.500 5z" fill="#111"/><g transform="translate(1697.5 65.0)"><rect x="1.3" y="2" width="24.5" height="24" rx="2.200" fill="#dfe7f7"/><path d="M1.3 10.4H25.8M1.3 18.32H25.8M13.55 2V10.4M13.55 10.4L9.39 18.32M13.55 10.4L17.72 18.32M9.39 18.32V26M17.72 18.32V26" stroke="#3a78ff" stroke-width="1.2" fill="none"/><rect x="1.3" y="2" width="24.5" height="24" rx="2.200" fill="none" stroke="#2f3f63" stroke-width="1.700"/></g><path d="M1733.0 77.1h9l-4.500 5z" fill="#111"/><g transform="translate(1749.0 65.0)"><rect x=".500" y="3.200" width="27.200" height="21.500" rx="3.500" fill="#f8e4dd" stroke="#f4a088" stroke-width="1.200"/><text x="3.600" y="18.700" font-family="Liberation Sans,sans-serif" font-weight="bold" font-size="12.600" fill="#cc1a14" textLength="21.600" lengthAdjust="spacingAndGlyphs">NAS</text></g><path d="M1784.5 77.1h9l-4.500 5z" fill="#111"/><g transform="translate(1802.0 65.0)"><path d="M4.400 1.900L.400 6.800v19l4-4.600z" fill="#b8dcb8" stroke="#1f9a2f" stroke-width="1.500" stroke-linejoin="round"/><path d="M4.400 21.200h20.300l-3.900 4.600H.400z" fill="#a9cba9" stroke="#1f9a2f" stroke-width="1.500" stroke-linejoin="round"/><rect x="4.400" y="1.900" width="20.300" height="19.300" fill="#c8e8c8" stroke="#1f9a2f" stroke-width="1.800"/><rect x="2.70" y="0.20" width="3.400" height="3.400" fill="#8a8a8a" stroke="#3c3c3c" stroke-width="1"/><rect x="23.00" y="0.20" width="3.400" height="3.400" fill="#8a8a8a" stroke="#3c3c3c" stroke-width="1"/><rect x="-1.30" y="5.10" width="3.400" height="3.400" fill="#8a8a8a" stroke="#3c3c3c" stroke-width="1"/><rect x="2.70" y="19.50" width="3.400" height="3.400" fill="#8a8a8a" stroke="#3c3c3c" stroke-width="1"/><rect x="23.00" y="19.50" width="3.400" height="3.400" fill="#8a8a8a" stroke="#3c3c3c" stroke-width="1"/><rect x="-1.30" y="24.10" width="3.400" height="3.400" fill="#8a8a8a" stroke="#3c3c3c" stroke-width="1"/><rect x="19.10" y="24.10" width="3.400" height="3.400" fill="#8a8a8a" stroke="#3c3c3c" stroke-width="1"/></g><path d="M1836.5 77.1h9l-4.500 5z" fill="#111"/><path d="M1853.5 73.5l5.800 5.800l-5.800 5.800" fill="none" stroke="#222" stroke-width="1.400"/><g fill="#8c8c8c"><rect x="214.0" y="888.0" width="1" height="1"/><rect x="217.0" y="888.0" width="1" height="1"/><rect x="214.0" y="891.0" width="1" height="1"/><rect x="217.0" y="891.0" width="1" height="1"/><rect x="214.0" y="894.0" width="1" height="1"/><rect x="217.0" y="894.0" width="1" height="1"/><rect x="214.0" y="897.0" width="1" height="1"/><rect x="217.0" y="897.0" width="1" height="1"/><rect x="214.0" y="900.0" width="1" height="1"/><rect x="217.0" y="900.0" width="1" height="1"/><rect x="214.0" y="903.0" width="1" height="1"/><rect x="217.0" y="903.0" width="1" height="1"/><rect x="214.0" y="906.0" width="1" height="1"/><rect x="217.0" y="906.0" width="1" height="1"/><rect x="214.0" y="909.0" width="1" height="1"/><rect x="217.0" y="909.0" width="1" height="1"/><rect x="214.0" y="912.0" width="1" height="1"/><rect x="217.0" y="912.0" width="1" height="1"/><rect x="214.0" y="915.0" width="1" height="1"/><rect x="217.0" y="915.0" width="1" height="1"/><rect x="214.0" y="918.0" width="1" height="1"/><rect x="217.0" y="918.0" width="1" height="1"/><rect x="214.0" y="921.0" width="1" height="1"/><rect x="217.0" y="921.0" width="1" height="1"/><rect x="214.0" y="924.0" width="1" height="1"/><rect x="217.0" y="924.0" width="1" height="1"/><rect x="214.0" y="927.0" width="1" height="1"/><rect x="217.0" y="927.0" width="1" height="1"/><rect x="214.0" y="930.0" width="1" height="1"/><rect x="217.0" y="930.0" width="1" height="1"/><rect x="214.0" y="933.0" width="1" height="1"/><rect x="217.0" y="933.0" width="1" height="1"/></g><g transform="translate(226.0 897.0)"><rect x="0.700" y="3.200" width="27.300" height="18" fill="none" stroke="#333" stroke-width="1.300" stroke-dasharray="3 3"/><path transform="translate(19.2 14.3) scale(0.977 0.85)" d="M0 0v12.400l2.900-2.800 2.300 5 2.400-1.100-2.300-4.800h4.200z" fill="#2a2e35" /><path d="M30 24.5v5h-5z" fill="#000"/></g><rect x="259.5" y="892.0" width="36.0" height="34.0" rx="3" fill="#cce4f7" stroke="#9ccbf0" stroke-width="1"/><g transform="translate(263.0 898.0)"><text x="1.900" y="12.600" font-family="Liberation Sans,sans-serif" font-weight="bold" font-size="15" fill="#23272e" textLength="26.500" lengthAdjust="spacingAndGlyphs">ENT</text><path transform="translate(19.6 14.8) scale(0.977 0.85)" d="M0 0v12.400l2.900-2.800 2.300 5 2.400-1.100-2.300-4.800h4.200z" fill="#2a2e35" /></g><g transform="translate(301.0 897.0)"><path d="M1 11.200L25 2.200M1 18.400L25 9.600M1 25.600L25 16.900" stroke="#333" stroke-width="1.200" fill="none"/></g><g transform="translate(338.0 898.0)"><path d="M1.500 8.600V21.700H14" fill="none" stroke="#c2c2c2" stroke-width="2.600"/><rect x="7.200" y="2.300" width="19.200" height="14" fill="#dfe6f7" stroke="#3565ff" stroke-width="1.400" stroke-dasharray="3.200 2.400"/><path transform="translate(18 13.3) scale(0.977 0.85)" d="M0 0v12.400l2.900-2.800 2.300 5 2.400-1.100-2.300-4.800h4.200z" fill="#2a2e35" /></g><g transform="translate(375.5 898.0)"><path d="M8.400 1.200l16.200 5.100.3 13.900-15.700 4.400L.3 13.300z" fill="none" stroke="#333" stroke-width="1.300" stroke-dasharray="3 2.600"/><path transform="translate(17.7 13.3) scale(0.977 0.85)" d="M0 0v12.400l2.900-2.800 2.300 5 2.400-1.100-2.300-4.800h4.200z" fill="#2a2e35" /></g><rect x="407.5" y="892.0" width="51.0" height="34.0" rx="3" fill="#c2dcf3" stroke="#9ccbf0"/><rect x="407.5" y="892.0" width="36.0" height="34.0" rx="3" fill="#cce4f7" stroke="#9ccbf0"/><g transform="translate(411.0 897.0)"><g transform="translate(13 16) rotate(-46)"><path d="M12.500 -7Q16.500 0 12.500 7" stroke="#f3df2c" stroke-width="5.200" fill="none"/><path d="M-13 -3h13.500l5-3.200h3.300v12.400h-3.300l-5-3.200H-13a3 3 0 0 1 0-6z" fill="#dbe5f6" stroke="#2a2e35" stroke-width="1.500" stroke-linejoin="round"/><path d="M5.500 -6v12M-9.500 0h5" fill="none" stroke="#2a2e35" stroke-width="1.300"/></g></g><path d="M446.5 908.8h9l-4.500 5z" fill="#111"/><g transform="translate(465.0 898.0)"><path transform="translate(1.2 1) scale(2.127 1.85)" d="M0 0v12.400l2.900-2.800 2.300 5 2.400-1.100-2.300-4.800h4.200z" fill="#e9e9e9" stroke="#a3a3a3" stroke-width=".75" stroke-linejoin="round"/></g><g fill="#8c8c8c"><rect x="659.0" y="888.0" width="1" height="1"/><rect x="662.0" y="888.0" width="1" height="1"/><rect x="659.0" y="891.0" width="1" height="1"/><rect x="662.0" y="891.0" width="1" height="1"/><rect x="659.0" y="894.0" width="1" height="1"/><rect x="662.0" y="894.0" width="1" height="1"/><rect x="659.0" y="897.0" width="1" height="1"/><rect x="662.0" y="897.0" width="1" height="1"/><rect x="659.0" y="900.0" width="1" height="1"/><rect x="662.0" y="900.0" width="1" height="1"/><rect x="659.0" y="903.0" width="1" height="1"/><rect x="662.0" y="903.0" width="1" height="1"/><rect x="659.0" y="906.0" width="1" height="1"/><rect x="662.0" y="906.0" width="1" height="1"/><rect x="659.0" y="909.0" width="1" height="1"/><rect x="662.0" y="909.0" width="1" height="1"/><rect x="659.0" y="912.0" width="1" height="1"/><rect x="662.0" y="912.0" width="1" height="1"/><rect x="659.0" y="915.0" width="1" height="1"/><rect x="662.0" y="915.0" width="1" height="1"/><rect x="659.0" y="918.0" width="1" height="1"/><rect x="662.0" y="918.0" width="1" height="1"/><rect x="659.0" y="921.0" width="1" height="1"/><rect x="662.0" y="921.0" width="1" height="1"/><rect x="659.0" y="924.0" width="1" height="1"/><rect x="662.0" y="924.0" width="1" height="1"/><rect x="659.0" y="927.0" width="1" height="1"/><rect x="662.0" y="927.0" width="1" height="1"/><rect x="659.0" y="930.0" width="1" height="1"/><rect x="662.0" y="930.0" width="1" height="1"/><rect x="659.0" y="933.0" width="1" height="1"/><rect x="662.0" y="933.0" width="1" height="1"/></g><g transform="translate(670.7 897.0)"><circle cx="14" cy="14" r="13.700" fill="#d5d5d5"/><path d="M9 19L19 9" stroke="#222" stroke-width="2.200"/></g><g transform="translate(707.6 897.0)"><circle cx="14" cy="14" r="13.700" fill="#d5d5d5"/><path d="M7 14h14M14 7v14" stroke="#222" stroke-width="2"/></g><g transform="translate(745.0 897.0)"><circle cx="14" cy="14" r="13.700" fill="#d5d5d5"/><path d="M7 14h14" stroke="#222" stroke-width="2"/></g><g transform="translate(782.0 897.0)"><circle cx="14" cy="14" r="13.700" fill="#d5d5d5"/><path d="M9.500 7v10M9.500 19.500v2M13 14.500h9" stroke="#222" stroke-width="2"/></g><g transform="translate(820.0 897.5)"><g opacity="1"><rect x="1.5" y="1.5" width="10.500" height="10.500" rx="1.500" fill="#b2b2b2" stroke="#3a3a3a" stroke-width="1.500"/><rect x="15" y="1.5" width="10.500" height="10.500" rx="1.500" fill="#b2b2b2" stroke="#3a3a3a" stroke-width="1.500"/><rect x="1.5" y="15" width="10.500" height="10.500" rx="1.500" fill="#b2b2b2" stroke="#3a3a3a" stroke-width="1.500"/><rect x="15" y="15" width="10.500" height="10.500" rx="1.500" fill="#b2b2b2" stroke="#3a3a3a" stroke-width="1.500"/></g></g><g transform="translate(857.0 897.5)"><rect x="1.5" y="1.5" width="10.500" height="10.500" rx="1.500" fill="#d5d5d5" stroke="#888" stroke-width="1.400"/><rect x="15" y="1.5" width="10.500" height="10.500" rx="1.500" fill="#f0f0f0" stroke="#bbb" stroke-width="1.400"/><rect x="1.5" y="15" width="10.500" height="10.500" rx="1.500" fill="#f0f0f0" stroke="#bbb" stroke-width="1.400"/><rect x="15" y="15" width="10.500" height="10.500" rx="1.500" fill="#fafafa" stroke="#ccc" stroke-width="1.400"/><path d="M15.500 11.500l10-9.500v9.500zM2 25l9.500-9.500H2z" fill="#bdbdbd"/></g><g transform="translate(894.0 896.0)"><path d="M7 13V8.500c0-8 12-8 12 0V13" fill="none" stroke="#4a4a4a" stroke-width="1.800"/><rect x="2" y="13" width="22" height="13" rx="2" fill="#c9c9c9" stroke="#4a4a4a" stroke-width="1.600"/><circle cx="13" cy="18.500" r="2" fill="none" stroke="#4a4a4a" stroke-width="1.300"/><path d="M13 20.500v2.500" stroke="#4a4a4a" stroke-width="1.300"/></g><path d="M928.5 908.8h9l-4.500 5z" fill="#111"/><g transform="translate(945.0 897.0)"><path d="M14 4v20M4 14h20" stroke="#4a4a4a" stroke-width="1.500"/><rect x="9.5" y="9.5" width="9.0" height="9.0" rx="1.200" fill="#c9c9c9" stroke="#4a4a4a" stroke-width="1.400"/><rect x="10.8" y="0.7999999999999998" width="6.4" height="6.4" rx="1.200" fill="#c9c9c9" stroke="#4a4a4a" stroke-width="1.400"/><rect x="10.8" y="20.8" width="6.4" height="6.4" rx="1.200" fill="#c9c9c9" stroke="#4a4a4a" stroke-width="1.400"/><rect x="0.7999999999999998" y="10.8" width="6.4" height="6.4" rx="1.200" fill="#c9c9c9" stroke="#4a4a4a" stroke-width="1.400"/><rect x="20.8" y="10.8" width="6.4" height="6.4" rx="1.200" fill="#c9c9c9" stroke="#4a4a4a" stroke-width="1.400"/><path d="M29 24v5h-5z" fill="#000"/></g><g transform="translate(982.0 897.0)"><circle cx="14" cy="14" r="13" fill="#e1e1e1" stroke="#9a9a9a" stroke-width="1.100"/><circle cx="14" cy="14" r="8.800" fill="#c9c9c9" stroke="#4a4a4a" stroke-width="1.500"/><rect x="10.500" y="10.500" width="7" height="7" rx="1.500" fill="#333"/></g><path d="M1020.0 905.2l5.800 5.800l-5.800 5.800" fill="none" stroke="#222" stroke-width="1.400"/><g fill="#8c8c8c"><rect x="1104.0" y="888.0" width="1" height="1"/><rect x="1107.0" y="888.0" width="1" height="1"/><rect x="1104.0" y="891.0" width="1" height="1"/><rect x="1107.0" y="891.0" width="1" height="1"/><rect x="1104.0" y="894.0" width="1" height="1"/><rect x="1107.0" y="894.0" width="1" height="1"/><rect x="1104.0" y="897.0" width="1" height="1"/><rect x="1107.0" y="897.0" width="1" height="1"/><rect x="1104.0" y="900.0" width="1" height="1"/><rect x="1107.0" y="900.0" width="1" height="1"/><rect x="1104.0" y="903.0" width="1" height="1"/><rect x="1107.0" y="903.0" width="1" height="1"/><rect x="1104.0" y="906.0" width="1" height="1"/><rect x="1107.0" y="906.0" width="1" height="1"/><rect x="1104.0" y="909.0" width="1" height="1"/><rect x="1107.0" y="909.0" width="1" height="1"/><rect x="1104.0" y="912.0" width="1" height="1"/><rect x="1107.0" y="912.0" width="1" height="1"/><rect x="1104.0" y="915.0" width="1" height="1"/><rect x="1107.0" y="915.0" width="1" height="1"/><rect x="1104.0" y="918.0" width="1" height="1"/><rect x="1107.0" y="918.0" width="1" height="1"/><rect x="1104.0" y="921.0" width="1" height="1"/><rect x="1107.0" y="921.0" width="1" height="1"/><rect x="1104.0" y="924.0" width="1" height="1"/><rect x="1107.0" y="924.0" width="1" height="1"/><rect x="1104.0" y="927.0" width="1" height="1"/><rect x="1107.0" y="927.0" width="1" height="1"/><rect x="1104.0" y="930.0" width="1" height="1"/><rect x="1107.0" y="930.0" width="1" height="1"/><rect x="1104.0" y="933.0" width="1" height="1"/><rect x="1107.0" y="933.0" width="1" height="1"/></g><g transform="translate(1117.0 897.0)"><rect x="8.500" y="0.500" width="11" height="11" rx="2" fill="#e4e8a0" stroke="#d8c24a" stroke-width="1.400"/><text x="0" y="27" font-family="Liberation Sans,sans-serif" font-weight="bold" font-size="13.500" fill="#222" textLength="25" lengthAdjust="spacingAndGlyphs">ENT</text><path d="M30 24v5h-5z" fill="#000"/></g><g transform="translate(1154.0 897.0)"><rect x="1.500" y="1.500" width="24" height="24" rx="2.500" fill="#f2f2f2" stroke="#a5a5a5" stroke-width="1.400"/><path d="M2 25L25 2M9 2v15M9 17h16M17 17v8" fill="none" stroke="#a5a5a5" stroke-width="1.300"/><path d="M10 16L24 3v13z" fill="#dedede"/></g><rect x="1186.0" y="892.0" width="37.0" height="34.0" rx="3" fill="#cce4f7" stroke="#9ccbf0" stroke-width="1"/><g transform="translate(1190.5 896.5)"><path d="M1 8.500L14 1l13 7.500v13.500L14 29.500 1 22z" fill="#8fb5f6" stroke="#333" stroke-width="1.500" stroke-linejoin="round"/><path d="M1 8.500L14 1l13 7.500L14 16z" fill="#cfe0fb"/><path d="M1 8.500l13 7.500v13.500L1 22z" fill="#7d9fdf"/><path d="M1 8.500L14 1l13 7.500v13.500L14 29.500 1 22z" fill="none" stroke="#333" stroke-width="1.500" stroke-linejoin="round"/><path d="M1 8.500l13 7.500 13-7.500M14 16v13.500" fill="none" stroke="#333" stroke-width="1.500"/></g><g transform="translate(1227.5 896.0)"><rect x="1.5" y="2.5" width="24" height="23" rx="2.200" fill="#dde6f6"/><path d="M1.500 2.500h12v8h-12zM17.500 10.500h8v7.500h-8zM1.500 18h8v7.500h-8z" fill="#8fb5f6"/><path d="M1.5 10.55H25.5M1.5 18.14H25.5M13.5 2.5V10.55M13.5 10.55L9.42 18.14M13.5 10.55L17.58 18.14M9.42 18.14V25.5M17.58 18.14V25.5" stroke="#333" stroke-width="1.3" fill="none"/><rect x="1.5" y="2.5" width="24" height="23" rx="2.200" fill="none" stroke="#333" stroke-width="1.700"/></g><g transform="translate(1264.0 896.5)"><defs><radialGradient id="rbw" gradientUnits="userSpaceOnUse" cx="14" cy="17" r="15"><stop offset="0" stop-color="#e02818"/><stop offset=".22" stop-color="#f0a020"/><stop offset=".36" stop-color="#e8e030"/><stop offset=".52" stop-color="#40c060"/><stop offset=".7" stop-color="#30b0e0"/><stop offset="1" stop-color="#2a50d0"/></radialGradient></defs><path d="M1 8.500L14 1l13 7.500v13.500L14 29.500 1 22z" fill="url(#rbw)"/><path d="M1 8.500L14 1l13 7.500L14 16z" fill="#3a68e0"/><path d="M6 8.500L14 4l8 4.500L14 16z" fill="#58a0f0" opacity=".7"/><path d="M1 8.500L14 1l13 7.500v13.500L14 29.500 1 22z" fill="none" stroke="#333" stroke-width="1.500" stroke-linejoin="round"/><path d="M1 8.500l13 7.500 13-7.500M14 16v13.500" fill="none" stroke="#333" stroke-width="1.100"/></g><path d="M1299.5 908.8h9l-4.500 5z" fill="#111"/><rect x="1312.0" y="892.0" width="36.5" height="34.0" rx="3" fill="#cce4f7" stroke="#9ccbf0" stroke-width="1"/><g transform="translate(1316.0 896.5)"><path d="M1 8.500L14 1l13 7.500v13.500L14 29.500 1 22z" fill="#d3e6f3" stroke="#333" stroke-width="1.400" stroke-linejoin="round"/><path d="M1 8.500l13 7.500 13-7.500M14 16v13.500" fill="none" stroke="#333" stroke-width="1.400"/><path d="M7.500 12.200v13.500M20.500 12.200v13.500M1 15.200l13 7.500 13-7.500M7.500 4.700l13 7.500M20.500 4.700l-13 7.500" fill="none" stroke="#333" stroke-width="1.200"/></g><g transform="translate(1353.0 896.5)"><path d="M1 8.500L14 1l13 7.500v13.500L14 29.500 1 22z" fill="none" stroke="#e05a40" stroke-width="1.500" stroke-linejoin="round"/><path d="M1 8.500l13 7.500 13-7.500M14 16v13.500" fill="none" stroke="#e05a40" stroke-width="1.500"/><path d="M1 22l13-7 13 7M14 1v14" fill="none" stroke="#e05a40" stroke-width="1.100"/></g><path d="M1388.5 908.8h9l-4.500 5z" fill="#111"/><g transform="translate(1404.0 896.0)"><g transform="translate(4 2) scale(.9)"><path d="M1 8.500L14 1l13 7.500v13.500L14 29.500 1 22z" fill="#b4b4b4" stroke="#333" stroke-width="1.500" stroke-linejoin="round"/><path d="M1 8.500L14 1l13 7.500L14 16z" fill="#f4f4f4"/><path d="M14 16l13-7.500v13.500l-13 7.500z" fill="#dcdcdc"/><path d="M1 8.500L14 1l13 7.500v13.500L14 29.500 1 22z" fill="none" stroke="#333" stroke-width="1.500" stroke-linejoin="round"/><path d="M1 8.500l13 7.500 13-7.500M14 16v13.500" fill="none" stroke="#333" stroke-width="1.500"/></g><rect x="0" y="0" width="15" height="12" fill="#f0f0f0"/><path d="M3.500 0v12M10.500 0v12" stroke="#3d6fe0" stroke-width="1.500"/><rect x="1.500" y="5.500" width="4" height="4" fill="#fff" stroke="#3d6fe0" stroke-width="1.300"/><rect x="8.500" y="1.500" width="4" height="4" fill="#fff" stroke="#3d6fe0" stroke-width="1.300"/></g><path d="M1441.0 908.8h9l-4.500 5z" fill="#111"/><path d="M1457.5 905.2l5.800 5.800l-5.800 5.800" fill="none" stroke="#222" stroke-width="1.400"/><g fill="#8c8c8c"><rect x="214.0" y="948.0" width="1" height="1"/><rect x="217.0" y="948.0" width="1" height="1"/><rect x="214.0" y="951.0" width="1" height="1"/><rect x="217.0" y="951.0" width="1" height="1"/><rect x="214.0" y="954.0" width="1" height="1"/><rect x="217.0" y="954.0" width="1" height="1"/><rect x="214.0" y="957.0" width="1" height="1"/><rect x="217.0" y="957.0" width="1" height="1"/><rect x="214.0" y="960.0" width="1" height="1"/><rect x="217.0" y="960.0" width="1" height="1"/><rect x="214.0" y="963.0" width="1" height="1"/><rect x="217.0" y="963.0" width="1" height="1"/><rect x="214.0" y="966.0" width="1" height="1"/><rect x="217.0" y="966.0" width="1" height="1"/><rect x="214.0" y="969.0" width="1" height="1"/><rect x="217.0" y="969.0" width="1" height="1"/><rect x="214.0" y="972.0" width="1" height="1"/><rect x="217.0" y="972.0" width="1" height="1"/><rect x="214.0" y="975.0" width="1" height="1"/><rect x="217.0" y="975.0" width="1" height="1"/><rect x="214.0" y="978.0" width="1" height="1"/><rect x="217.0" y="978.0" width="1" height="1"/><rect x="214.0" y="981.0" width="1" height="1"/><rect x="217.0" y="981.0" width="1" height="1"/><rect x="214.0" y="984.0" width="1" height="1"/><rect x="217.0" y="984.0" width="1" height="1"/><rect x="214.0" y="987.0" width="1" height="1"/><rect x="217.0" y="987.0" width="1" height="1"/><rect x="214.0" y="990.0" width="1" height="1"/><rect x="217.0" y="990.0" width="1" height="1"/></g><g transform="translate(227.0 956.0)"><path d="M1 8.500L14 1l13 7.500v13.500L14 29.500M27 8.500L14 16" fill="none" stroke="#9a9a9a" stroke-width="1.300" stroke-linejoin="round"/><path d="M1 8.500v13.500L14 29.500M1 8.500L14 16v13.500" fill="none" stroke="#9a9a9a" stroke-width="1.300" stroke-dasharray="3 2.500"/><circle cx="1" cy="8.5" r="2.100" fill="#b0b0b0"/><circle cx="1" cy="22" r="2.100" fill="#b0b0b0"/><circle cx="14" cy="29.5" r="2.100" fill="#b0b0b0"/><circle cx="14" cy="16" r="2.100" fill="#b0b0b0"/></g><g transform="translate(264.5 956.0)"><path d="M1 8.500L14 1l13 7.500v13.500L14 29.500 1 22z" fill="#fafafa" stroke="#999" stroke-width="1.4" stroke-linejoin="round"/><path d="M1 8.500l13 7.500 13-7.500M14 16v13.500" fill="none" stroke="#999" stroke-width="1.4" stroke-linejoin="round"/></g><g transform="translate(302.0 956.0)"><path d="M1 8.500L14 1l13 7.500v13.500L14 29.500 1 22z" fill="#f2f2f2" stroke="#999" stroke-width="1.300" stroke-linejoin="round"/><path d="M1 8.500l13 7.500v13.500L1 22z" fill="#a6a6a6"/><path d="M14 16l13-7.500v13.500l-13 7.500z" fill="#e2e2e2"/><path d="M1 8.500l13 7.500 13-7.500M14 16v13.500" fill="none" stroke="#999" stroke-width="1.200"/></g><g fill="#8c8c8c"><rect x="348.0" y="948.0" width="1" height="1"/><rect x="351.0" y="948.0" width="1" height="1"/><rect x="348.0" y="951.0" width="1" height="1"/><rect x="351.0" y="951.0" width="1" height="1"/><rect x="348.0" y="954.0" width="1" height="1"/><rect x="351.0" y="954.0" width="1" height="1"/><rect x="348.0" y="957.0" width="1" height="1"/><rect x="351.0" y="957.0" width="1" height="1"/><rect x="348.0" y="960.0" width="1" height="1"/><rect x="351.0" y="960.0" width="1" height="1"/><rect x="348.0" y="963.0" width="1" height="1"/><rect x="351.0" y="963.0" width="1" height="1"/><rect x="348.0" y="966.0" width="1" height="1"/><rect x="351.0" y="966.0" width="1" height="1"/><rect x="348.0" y="969.0" width="1" height="1"/><rect x="351.0" y="969.0" width="1" height="1"/><rect x="348.0" y="972.0" width="1" height="1"/><rect x="351.0" y="972.0" width="1" height="1"/><rect x="348.0" y="975.0" width="1" height="1"/><rect x="351.0" y="975.0" width="1" height="1"/><rect x="348.0" y="978.0" width="1" height="1"/><rect x="351.0" y="978.0" width="1" height="1"/><rect x="348.0" y="981.0" width="1" height="1"/><rect x="351.0" y="981.0" width="1" height="1"/><rect x="348.0" y="984.0" width="1" height="1"/><rect x="351.0" y="984.0" width="1" height="1"/><rect x="348.0" y="987.0" width="1" height="1"/><rect x="351.0" y="987.0" width="1" height="1"/><rect x="348.0" y="990.0" width="1" height="1"/><rect x="351.0" y="990.0" width="1" height="1"/></g><rect x="355.5" y="952.5" width="36.0" height="34.0" rx="3" fill="#cce4f7" stroke="#9ccbf0" stroke-width="1"/><g transform="translate(359.5 956.0)"><path d="M1 8.500L14 1l13 7.500v13.500L14 29.500 1 22z" fill="#e4d6ea" stroke="#4a4a4a" stroke-width="1.500" stroke-linejoin="round"/><path d="M1 22l13-7 13 7M14 1v14" fill="none" stroke="#e9a3bd" stroke-width="1.100"/><path d="M1 8.500l13 7.500 13-7.500M14 16v13.500" fill="none" stroke="#df3068" stroke-width="1.500"/><path d="M1 22l13 7.500 13-7.500" fill="none" stroke="#df3068" stroke-width="1.700"/></g><rect x="392.5" y="952.5" width="36.0" height="34.0" rx="3" fill="#cce4f7" stroke="#9ccbf0" stroke-width="1"/><g transform="translate(397.0 955.5)"><rect x="1.5" y="2.5" width="24.5" height="23.5" rx="2.200" fill="#ddd0ea"/><path d="M1.5 10.72H26.0M1.5 18.48H26.0M13.75 2.5V10.72M13.75 10.72L9.59 18.48M13.75 10.72L17.92 18.48M9.59 18.48V26.0M17.92 18.48V26.0" stroke="#df3068" stroke-width="1.5" fill="none"/><rect x="1.5" y="2.5" width="24.5" height="23.5" rx="2.200" fill="none" stroke="#4a4a4a" stroke-width="1.700"/></g><rect x="429.5" y="952.5" width="36.0" height="34.0" rx="3" fill="#cce4f7" stroke="#9ccbf0" stroke-width="1"/><g transform="translate(433.5 956.0)"><path d="M2 8l5-5h19v18l-5 5H2z" fill="#df3068" stroke="#df3068" stroke-width="1"/><path d="M2 12l3-3M2 16l3-3M2 20l3-3M2 24l3-3M6 26l3-3M10 26l3-3M14 26l3-3" stroke="#fff" stroke-width=".8"/><rect x="6.5" y="2" width="20.5" height="19.5" rx="2.200" fill="#d8d4e6"/><path d="M6.5 8.82H27.0M6.5 15.26H27.0M16.75 2.0V8.82M16.75 8.82L13.27 15.26M16.75 8.82L20.23 15.26M13.27 15.26V21.5M20.23 15.26V21.5" stroke="#444" stroke-width="1.5" fill="none"/><rect x="6.5" y="2" width="20.5" height="19.5" rx="2.200" fill="none" stroke="#4a4a4a" stroke-width="1.700"/></g><g transform="translate(470.0 956.0)"><circle cx="13.600" cy="14.500" r="12.500" fill="#f5e3ea"/><path d="M.4 12.600h11.600M6.200 6.800v11.600" stroke="#df3068" stroke-width="2.900"/><path d="M15.500 7.200h9.500M20.200 2.400v9.600M11.500 22h9.500M16.200 17.200v9.600" stroke="#333" stroke-width="1.400"/></g><path d="M505.5 967.8h9l-4.500 5z" fill="#111"/><g transform="translate(522.0 956.0)"><path d="M3 3h22c-3 2.500-7 4-7 6v10c0 2 4 3.500 7 6H3c3-2.500 7-4 7-6V9c0-2-4-3.500-7-6z" fill="#e4d6ea" stroke="#4a4a4a" stroke-width="1.500" stroke-linejoin="round" transform="translate(2 0) scale(.86 1)"/></g><rect x="555.5" y="952.5" width="51.0" height="34.0" rx="3" fill="#c2dcf3" stroke="#9ccbf0"/><rect x="555.5" y="952.5" width="36.0" height="34.0" rx="3" fill="#cce4f7" stroke="#9ccbf0"/><g transform="translate(559.5 956.0)"><path d="M1.500 14L8 2.500h12L26.500 14 20 25.500H8z" fill="#e3d3e6" stroke="#4a4a4a" stroke-width="1.400" stroke-linejoin="round"/><circle cx="14" cy="14" r="4.800" fill="none" stroke="#df3068" stroke-width="2.200"/></g><path d="M594.5 967.8h9l-4.500 5z" fill="#111"/><path d="M611.5 964.2l5.800 5.800l-5.800 5.800" fill="none" stroke="#222" stroke-width="1.400"/><g fill="#8c8c8c"><rect x="659.0" y="948.0" width="1" height="1"/><rect x="662.0" y="948.0" width="1" height="1"/><rect x="659.0" y="951.0" width="1" height="1"/><rect x="662.0" y="951.0" width="1" height="1"/><rect x="659.0" y="954.0" width="1" height="1"/><rect x="662.0" y="954.0" width="1" height="1"/><rect x="659.0" y="957.0" width="1" height="1"/><rect x="662.0" y="957.0" width="1" height="1"/><rect x="659.0" y="960.0" width="1" height="1"/><rect x="662.0" y="960.0" width="1" height="1"/><rect x="659.0" y="963.0" width="1" height="1"/><rect x="662.0" y="963.0" width="1" height="1"/><rect x="659.0" y="966.0" width="1" height="1"/><rect x="662.0" y="966.0" width="1" height="1"/><rect x="659.0" y="969.0" width="1" height="1"/><rect x="662.0" y="969.0" width="1" height="1"/><rect x="659.0" y="972.0" width="1" height="1"/><rect x="662.0" y="972.0" width="1" height="1"/><rect x="659.0" y="975.0" width="1" height="1"/><rect x="662.0" y="975.0" width="1" height="1"/><rect x="659.0" y="978.0" width="1" height="1"/><rect x="662.0" y="978.0" width="1" height="1"/><rect x="659.0" y="981.0" width="1" height="1"/><rect x="662.0" y="981.0" width="1" height="1"/><rect x="659.0" y="984.0" width="1" height="1"/><rect x="662.0" y="984.0" width="1" height="1"/><rect x="659.0" y="987.0" width="1" height="1"/><rect x="662.0" y="987.0" width="1" height="1"/><rect x="659.0" y="990.0" width="1" height="1"/><rect x="662.0" y="990.0" width="1" height="1"/></g><rect x="667.5" y="952.0" width="36.5" height="34.0" rx="3" fill="#cce4f7" stroke="#9ccbf0" stroke-width="1"/><g transform="translate(671.5 956.0)"><rect x="2.700" y="4.300" width="23.300" height="19.500" rx="1" fill="#e4e8a0" stroke="#b79c0c" stroke-width="1.700"/><circle cx="2.7" cy="4.3" r="2.500" fill="#fff" stroke="#444" stroke-width="1.200"/><circle cx="26" cy="4.3" r="2.500" fill="#fff" stroke="#444" stroke-width="1.200"/><circle cx="2.7" cy="23.8" r="2.500" fill="#fff" stroke="#444" stroke-width="1.200"/><circle cx="26" cy="23.8" r="2.500" fill="#fff" stroke="#444" stroke-width="1.200"/></g><g transform="translate(707.5 956.0)"><rect x="1" y="3.300" width="26.600" height="20.800" rx="2.500" fill="#f4f0a0" stroke="#b79c0c" stroke-width="1.600"/><path d="M14.300 0v28M1 13.700h27" stroke="#1f9a2f" stroke-width="2.200" stroke-dasharray="4.500 3"/></g><rect x="741.5" y="952.0" width="51.5" height="34.0" rx="3" fill="#c2dcf3" stroke="#9ccbf0"/><rect x="741.5" y="952.0" width="36.0" height="34.0" rx="3" fill="#cce4f7" stroke="#9ccbf0"/><g transform="translate(745.5 956.0)"><rect x="1" y="3.700" width="26.600" height="21" rx="2.500" fill="#e4e8a0" stroke="#b79c0c" stroke-width="1.600"/><path d="M14.300 4v20.500" stroke="#1f9a2f" stroke-width="2.200"/><circle cx="14.300" cy="4" r="2.800" fill="#fff" stroke="#444" stroke-width="1.200"/><circle cx="14.300" cy="24.600" r="2.800" fill="#fff" stroke="#444" stroke-width="1.200"/></g><path d="M780.5 967.8h9l-4.500 5z" fill="#111"/><rect x="794.0" y="952.0" width="36.0" height="34.0" rx="3" fill="#cce4f7" stroke="#9ccbf0" stroke-width="1"/><g transform="translate(798.0 955.0)"><rect x="1" y="4.700" width="26.600" height="21" rx="2.500" fill="#e4eba8" stroke="#1f9a2f" stroke-width="1.700"/><path d="M14.300 5v20.500" stroke="#1f9a2f" stroke-width="2"/><rect x="-.5" y="1" width="17" height="10.500" rx="5" fill="#cce4f7"/><rect x="0.4" y="1.7" width="14.600" height="8.400" rx="4.200" fill="#2f6fea"/><circle cx="10.6" cy="5.9" r="3.100" fill="#fff"/></g><rect x="830.0" y="952.0" width="37.0" height="34.0" rx="3" fill="#cce4f7" stroke="#9ccbf0" stroke-width="1"/><g transform="translate(834.5 956.0)"><rect x="1" y="3.700" width="26.600" height="21" rx="2.500" fill="#e4e8a0" stroke="#d8402c" stroke-width="1.700"/></g><rect x="867.0" y="952.0" width="52.0" height="34.0" rx="3" fill="#c2dcf3" stroke="#9ccbf0"/><rect x="867.0" y="952.0" width="36.0" height="34.0" rx="3" fill="#cce4f7" stroke="#9ccbf0"/><g transform="translate(871.0 956.0)"><rect x="1" y="3.700" width="26.600" height="21" rx="2.500" fill="#e4e8a0" stroke="#b79c0c" stroke-width="1.600"/><path d="M14.300 4v20.500" stroke="#b79c0c" stroke-width="2.600"/></g><path d="M906.5 967.8h9l-4.500 5z" fill="#111"/><rect x="920.0" y="952.0" width="36.0" height="34.0" rx="3" fill="#cce4f7" stroke="#9ccbf0" stroke-width="1"/><g transform="translate(924.0 956.0)"><path d="M1.500 1.500l10 4.500v17l-10 4.500zM27 1.500l-10 4.500v17l10 4.500z" fill="#e4e8a0" stroke="#3d6fe0" stroke-width="1.500" stroke-linejoin="round"/><path d="M11.500 6h5.500v17h-5.500z" fill="#e4e8a0"/><path d="M11.500 6c2-1 3.500-1 5.500 0M11.500 23c2 1 3.500 1 5.500 0" fill="none" stroke="#3d6fe0" stroke-width="1.200"/></g><g fill="#8c8c8c"><rect x="1104.0" y="948.0" width="1" height="1"/><rect x="1107.0" y="948.0" width="1" height="1"/><rect x="1104.0" y="951.0" width="1" height="1"/><rect x="1107.0" y="951.0" width="1" height="1"/><rect x="1104.0" y="954.0" width="1" height="1"/><rect x="1107.0" y="954.0" width="1" height="1"/><rect x="1104.0" y="957.0" width="1" height="1"/><rect x="1107.0" y="957.0" width="1" height="1"/><rect x="1104.0" y="960.0" width="1" height="1"/><rect x="1107.0" y="960.0" width="1" height="1"/><rect x="1104.0" y="963.0" width="1" height="1"/><rect x="1107.0" y="963.0" width="1" height="1"/><rect x="1104.0" y="966.0" width="1" height="1"/><rect x="1107.0" y="966.0" width="1" height="1"/><rect x="1104.0" y="969.0" width="1" height="1"/><rect x="1107.0" y="969.0" width="1" height="1"/><rect x="1104.0" y="972.0" width="1" height="1"/><rect x="1107.0" y="972.0" width="1" height="1"/><rect x="1104.0" y="975.0" width="1" height="1"/><rect x="1107.0" y="975.0" width="1" height="1"/><rect x="1104.0" y="978.0" width="1" height="1"/><rect x="1107.0" y="978.0" width="1" height="1"/><rect x="1104.0" y="981.0" width="1" height="1"/><rect x="1107.0" y="981.0" width="1" height="1"/><rect x="1104.0" y="984.0" width="1" height="1"/><rect x="1107.0" y="984.0" width="1" height="1"/><rect x="1104.0" y="987.0" width="1" height="1"/><rect x="1107.0" y="987.0" width="1" height="1"/><rect x="1104.0" y="990.0" width="1" height="1"/><rect x="1107.0" y="990.0" width="1" height="1"/></g><rect x="1112.5" y="952.5" width="36.0" height="34.0" rx="3" fill="#cce4f7" stroke="#9ccbf0" stroke-width="1"/><g transform="translate(1116.5 955.5)"><rect x="4" y="6" width="20" height="17" fill="#b6e4d0" stroke="#1f9a2f" stroke-width="1.600"/><path d="M4 23l-2 4h19l3-4" fill="none" stroke="#1f9a2f" stroke-width="1.500"/><rect x="22.2" y="4.2" width="3.600" height="3.600" fill="#333"/><rect x="2.2" y="21.2" width="3.600" height="3.600" fill="#333"/><rect x="22.2" y="21.2" width="3.600" height="3.600" fill="#333"/><rect x="0.19999999999999996" y="25.2" width="3.600" height="3.600" fill="#333"/><rect x="19.2" y="25.2" width="3.600" height="3.600" fill="#333"/><rect x="0" y="1" width="14.600" height="8.400" rx="4.200" fill="#2f6fea"/><circle cx="10.2" cy="5.2" r="3.100" fill="#fff"/></g><g transform="translate(1154.0 956.5)"><defs><linearGradient id="gc" x1="0" y1="0" x2="1" y2="1"><stop offset="0" stop-color="#bfe6bf"/><stop offset="1" stop-color="#5aa860"/></linearGradient></defs><path d="M2 7l4-4h19v18l-4 5H2z" fill="url(#gc)" stroke="#333" stroke-width="1.500" stroke-linejoin="round"/><path d="M2 7h19v19M21 7l4-4" fill="none" stroke="#333" stroke-width="1.300"/></g><g transform="translate(1190.5 956.5)"><path d="M2 8l5-5h18v17l-5 6H2z" fill="#d8f0d8" stroke="#333" stroke-width="1.400" stroke-linejoin="round"/><path d="M2 8h18v18M20 8l5-5" fill="none" stroke="#333" stroke-width="1.300"/><path d="M11 8v18M2 17h18M7 3l-5 5M16 3l-5 5M25 12l-5 5" fill="none" stroke="#1f9a2f" stroke-width="1.500" stroke-dasharray="3.500 2"/></g><path d="M1228.0 964.2l5.800 5.800l-5.800 5.800" fill="none" stroke="#222" stroke-width="1.400"/><g fill="#8c8c8c"><rect x="1266.0" y="948.0" width="1" height="1"/><rect x="1269.0" y="948.0" width="1" height="1"/><rect x="1266.0" y="951.0" width="1" height="1"/><rect x="1269.0" y="951.0" width="1" height="1"/><rect x="1266.0" y="954.0" width="1" height="1"/><rect x="1269.0" y="954.0" width="1" height="1"/><rect x="1266.0" y="957.0" width="1" height="1"/><rect x="1269.0" y="957.0" width="1" height="1"/><rect x="1266.0" y="960.0" width="1" height="1"/><rect x="1269.0" y="960.0" width="1" height="1"/><rect x="1266.0" y="963.0" width="1" height="1"/><rect x="1269.0" y="963.0" width="1" height="1"/><rect x="1266.0" y="966.0" width="1" height="1"/><rect x="1269.0" y="966.0" width="1" height="1"/><rect x="1266.0" y="969.0" width="1" height="1"/><rect x="1269.0" y="969.0" width="1" height="1"/><rect x="1266.0" y="972.0" width="1" height="1"/><rect x="1269.0" y="972.0" width="1" height="1"/><rect x="1266.0" y="975.0" width="1" height="1"/><rect x="1269.0" y="975.0" width="1" height="1"/><rect x="1266.0" y="978.0" width="1" height="1"/><rect x="1269.0" y="978.0" width="1" height="1"/><rect x="1266.0" y="981.0" width="1" height="1"/><rect x="1269.0" y="981.0" width="1" height="1"/><rect x="1266.0" y="984.0" width="1" height="1"/><rect x="1269.0" y="984.0" width="1" height="1"/><rect x="1266.0" y="987.0" width="1" height="1"/><rect x="1269.0" y="987.0" width="1" height="1"/><rect x="1266.0" y="990.0" width="1" height="1"/><rect x="1269.0" y="990.0" width="1" height="1"/></g><rect x="1274.5" y="952.5" width="36.0" height="34.0" rx="3" fill="#cce4f7" stroke="#9ccbf0" stroke-width="1"/><g transform="translate(1278.0 955.0)"><path d="M4 12c0 9 8 14 20 14" fill="none" stroke="#333" stroke-width="1.500"/><circle cx="4" cy="13" r="2.300" fill="#fff" stroke="#df3068" stroke-width="1.300"/><circle cx="24" cy="26" r="2.300" fill="#fff" stroke="#df3068" stroke-width="1.300"/><circle cx="25" cy="5" r="2.300" fill="#fff" stroke="#df3068" stroke-width="1.300"/><path d="M16 5h6.500" stroke="#333" stroke-width="1.300"/><rect x="1" y="1.5" width="14.600" height="8.400" rx="4.200" fill="#2f6fea"/><circle cx="11.2" cy="5.7" r="3.100" fill="#fff"/></g><rect x="1311.0" y="952.5" width="52.0" height="34.0" rx="3" fill="#c2dcf3" stroke="#9ccbf0"/><rect x="1311.0" y="952.5" width="36.0" height="34.0" rx="3" fill="#cce4f7" stroke="#9ccbf0"/><g transform="translate(1315.0 957.0)"><rect x="2" y="2" width="24" height="24" rx="1" fill="#e2d2e4" stroke="#333" stroke-width="1.700"/><rect x="11.500" y="11.500" width="5" height="5" fill="#df3068"/></g><path d="M1350.5 967.8h9l-4.500 5z" fill="#111"/><rect x="1363.5" y="952.5" width="51.5" height="34.0" rx="3" fill="#c2dcf3" stroke="#9ccbf0"/><rect x="1363.5" y="952.5" width="36.0" height="34.0" rx="3" fill="#cce4f7" stroke="#9ccbf0"/><g transform="translate(1367.5 956.5)"><path d="M24 3C10 4 3 9 3 15s8 10 21 11" fill="none" stroke="#333" stroke-width="1.500"/><circle cx="24" cy="3.500" r="2.400" fill="#fff" stroke="#df3068" stroke-width="1.300"/><circle cx="24" cy="25.500" r="2.400" fill="#fff" stroke="#df3068" stroke-width="1.300"/><circle cx="3.500" cy="14.500" r="2.400" fill="#fff" stroke="#df3068" stroke-width="1.300"/></g><path d="M1402.5 967.8h9l-4.500 5z" fill="#111"/><g transform="translate(1419.0 956.0)"><path d="M1.500 22l8-11h18l-8 11z" fill="#e4d6ea" stroke="#333" stroke-width="1.400" stroke-linejoin="round"/><path d="M14 4v13l-6 4M14 17h9" fill="none" stroke="#df3068" stroke-width="1.500"/></g><path d="M1456.5 964.2l5.800 5.800l-5.800 5.800" fill="none" stroke="#222" stroke-width="1.400"/></svg>
<svg style="position:absolute;left:436px;top:104px" width="1117" height="751" viewBox="436 104 1117 751"><defs><linearGradient id="gMain" gradientUnits="userSpaceOnUse" x1="436" y1="0" x2="1230" y2="0"><stop offset="0" stop-color="#bdbdbd"/><stop offset="0.25" stop-color="#b6b6b6"/><stop offset="0.45" stop-color="#a8a8a8"/><stop offset="0.62" stop-color="#959595"/><stop offset="0.76" stop-color="#7e7e7e"/><stop offset="0.88" stop-color="#646464"/><stop offset="1" stop-color="#4a4a4a"/></linearGradient><linearGradient id="gTopShade" gradientUnits="userSpaceOnUse" x1="0" y1="256" x2="0" y2="476"><stop offset="0" stop-color="#1c1c1c" stop-opacity="1"/><stop offset="0.02" stop-color="#1e1e1e" stop-opacity="0.97"/><stop offset="0.055" stop-color="#242424" stop-opacity="0.88"/><stop offset="0.09" stop-color="#282828" stop-opacity="0.8"/><stop offset="0.127" stop-color="#2c2c2c" stop-opacity="0.66"/><stop offset="0.205" stop-color="#303030" stop-opacity="0.34"/><stop offset="0.286" stop-color="#303030" stop-opacity="0.18"/><stop offset="0.445" stop-color="#303030" stop-opacity="0.065"/><stop offset="0.61" stop-color="#303030" stop-opacity="0.012"/><stop offset="1" stop-color="#303030" stop-opacity="0"/></linearGradient><linearGradient id="gTopShade2" gradientUnits="userSpaceOnUse" x1="0" y1="256" x2="0" y2="436"><stop offset="0" stop-color="#303030" stop-opacity="0.1"/><stop offset="0.16" stop-color="#303030" stop-opacity="0.22"/><stop offset="0.26" stop-color="#303030" stop-opacity="0.275"/><stop offset="0.355" stop-color="#303030" stop-opacity="0.22"/><stop offset="0.555" stop-color="#303030" stop-opacity="0.1"/><stop offset="0.75" stop-color="#303030" stop-opacity="0.05"/><stop offset="1" stop-color="#303030" stop-opacity="0"/></linearGradient><linearGradient id="gNavy" gradientUnits="userSpaceOnUse" x1="0" y1="440" x2="0" y2="855"><stop offset="0" stop-color="#1a2b3b"/><stop offset="0.45" stop-color="#223445"/><stop offset="1" stop-color="#34485a"/></linearGradient><linearGradient id="gOlive" gradientUnits="userSpaceOnUse" x1="0" y1="125" x2="0" y2="855"><stop offset="0" stop-color="#2a2a00"/><stop offset="0.1" stop-color="#333300"/><stop offset="0.24" stop-color="#434300"/><stop offset="0.4" stop-color="#4e4e00"/><stop offset="0.55" stop-color="#4d4d00"/><stop offset="0.7" stop-color="#434300"/><stop offset="0.745" stop-color="#3a3a00"/><stop offset="0.8" stop-color="#454500"/><stop offset="0.9" stop-color="#4c4c00"/><stop offset="1" stop-color="#4f4f00"/></linearGradient><linearGradient id="gTopBand" gradientUnits="userSpaceOnUse" x1="495.6" y1="101" x2="491.6" y2="126.5"><stop offset="0" stop-color="#c8c800"/><stop offset="0.3" stop-color="#c0c000"/><stop offset="0.55" stop-color="#909000"/><stop offset="0.8" stop-color="#444400"/><stop offset="1" stop-color="#141400"/></linearGradient><linearGradient id="gBand4" gradientUnits="userSpaceOnUse" x1="436" y1="0" x2="833" y2="0"><stop offset="0" stop-color="#c6c600"/><stop offset="0.3" stop-color="#baba00"/><stop offset="0.55" stop-color="#a0a000"/><stop offset="0.76" stop-color="#7c7c00"/><stop offset="0.9" stop-color="#484800"/><stop offset="0.97" stop-color="#262600"/><stop offset="1" stop-color="#1c1c00"/></linearGradient><linearGradient id="gGreyBand" gradientUnits="userSpaceOnUse" x1="0" y1="203" x2="0" y2="238"><stop offset="0" stop-color="#c2c2c2"/><stop offset="0.35" stop-color="#b8b8b8"/><stop offset="0.65" stop-color="#8a8a8a"/><stop offset="0.88" stop-color="#404040"/><stop offset="1" stop-color="#222222"/></linearGradient><linearGradient id="gGreyBandR" gradientUnits="userSpaceOnUse" x1="600" y1="0" x2="830" y2="0"><stop offset="0" stop-color="#000" stop-opacity="0"/><stop offset="1" stop-color="#000" stop-opacity="0.55"/></linearGradient><linearGradient id="gTopGrey" gradientUnits="userSpaceOnUse" x1="500" y1="0" x2="830" y2="0"><stop offset="0" stop-color="#c4c4c4"/><stop offset="0.35" stop-color="#a8a8a8"/><stop offset="0.62" stop-color="#7c7c7c"/><stop offset="0.85" stop-color="#4c4c4c"/><stop offset="0.95" stop-color="#2c2c2c"/><stop offset="1" stop-color="#202020"/></linearGradient><linearGradient id="gRightGrey" gradientUnits="userSpaceOnUse" x1="1474" y1="300" x2="1556" y2="322"><stop offset="0" stop-color="#1e1e1e"/><stop offset="0.3" stop-color="#262626"/><stop offset="0.6" stop-color="#383838"/><stop offset="0.85" stop-color="#525252"/><stop offset="1" stop-color="#5e5e5e"/></linearGradient><linearGradient id="gRightGreyD" gradientUnits="userSpaceOnUse" x1="0" y1="390" x2="0" y2="525"><stop offset="0" stop-color="#1e1e1e" stop-opacity="0"/><stop offset="1" stop-color="#1e1e1e" stop-opacity="0.45"/></linearGradient><linearGradient id="gYShade" gradientUnits="userSpaceOnUse" x1="1437.4" y1="281.9" x2="1453.0" y2="245.0"><stop offset="0" stop-color="#121200" stop-opacity="1"/><stop offset="0.1" stop-color="#2c2c00" stop-opacity="0.9"/><stop offset="0.28" stop-color="#606000" stop-opacity="0.7"/><stop offset="0.5" stop-color="#989800" stop-opacity="0.42"/><stop offset="0.78" stop-color="#b8b800" stop-opacity="0.15"/><stop offset="1" stop-color="#c8c800" stop-opacity="0"/></linearGradient><linearGradient id="gYShade2" gradientUnits="userSpaceOnUse" x1="1300" y1="175" x2="1270" y2="215"><stop offset="0" stop-color="#c8c800" stop-opacity="0"/><stop offset="1" stop-color="#9a9a00" stop-opacity="0.55"/></linearGradient><linearGradient id="gBRyellow" gradientUnits="userSpaceOnUse" x1="1470" y1="760" x2="1553" y2="790"><stop offset="0" stop-color="#4e4e00"/><stop offset="0.25" stop-color="#6a6a00"/><stop offset="0.6" stop-color="#8e8e00"/><stop offset="1" stop-color="#9c9c00"/></linearGradient><linearGradient id="gWedge" gradientUnits="userSpaceOnUse" x1="1168" y1="192" x2="1250" y2="250"><stop offset="0" stop-color="#141400" stop-opacity="0.9"/><stop offset="1" stop-color="#141400" stop-opacity="0"/></linearGradient><linearGradient id="gLowGrey" gradientUnits="userSpaceOnUse" x1="1018" y1="0" x2="1206" y2="0"><stop offset="0" stop-color="#8e8e8e"/><stop offset="0.5" stop-color="#686868"/><stop offset="1" stop-color="#3e3e3e"/></linearGradient><linearGradient id="gGreyWedge" gradientUnits="userSpaceOnUse" x1="1090" y1="300" x2="1180" y2="420"><stop offset="0" stop-color="#666"/><stop offset="1" stop-color="#444"/></linearGradient><linearGradient id="gMk2" gradientUnits="userSpaceOnUse" x1="500" y1="0" x2="750" y2="0"><stop offset="0" stop-color="#000"/><stop offset="1" stop-color="#fff"/></linearGradient><linearGradient id="gMk3" gradientUnits="userSpaceOnUse" x1="765" y1="0" x2="900" y2="0"><stop offset="0" stop-color="#000"/><stop offset="1" stop-color="#fff"/></linearGradient><mask id="mk2" maskUnits="userSpaceOnUse" x="436" y="240" width="800" height="220"><rect x="436" y="240" width="800" height="220" fill="url(#gMk2)"/></mask><mask id="mk3" maskUnits="userSpaceOnUse" x="436" y="240" width="800" height="220"><rect x="436" y="240" width="800" height="220" fill="url(#gMk3)"/></mask><linearGradient id="gTopShade3" gradientUnits="userSpaceOnUse" x1="0" y1="256" x2="0" y2="436"><stop offset="0" stop-color="#303030" stop-opacity="0.45"/><stop offset="0.067" stop-color="#303030" stop-opacity="0.5"/><stop offset="0.167" stop-color="#303030" stop-opacity="0.56"/><stop offset="0.267" stop-color="#303030" stop-opacity="0.4"/><stop offset="0.367" stop-color="#303030" stop-opacity="0.31"/><stop offset="0.46" stop-color="#303030" stop-opacity="0.22"/><stop offset="0.56" stop-color="#303030" stop-opacity="0.19"/><stop offset="0.76" stop-color="#303030" stop-opacity="0.09"/><stop offset="1" stop-color="#303030" stop-opacity="0.02"/></linearGradient><radialGradient id="gLowR" gradientUnits="userSpaceOnUse" cx="1190" cy="640" r="210"><stop offset="0" stop-color="#202020" stop-opacity="0.38"/><stop offset="0.5" stop-color="#202020" stop-opacity="0.2"/><stop offset="1" stop-color="#202020" stop-opacity="0"/></radialGradient><linearGradient id="gTB0" gradientUnits="userSpaceOnUse" x1="453.0" y1="97.3" x2="449.2" y2="123.0"><stop offset="0" stop-color="#c6c600"/><stop offset="0.4" stop-color="#b8b800"/><stop offset="0.66" stop-color="#7c7c00"/><stop offset="0.86" stop-color="#363600"/><stop offset="1" stop-color="#141400"/></linearGradient><linearGradient id="gTB1" gradientUnits="userSpaceOnUse" x1="485.0" y1="102.3" x2="481.4" y2="126.8"><stop offset="0" stop-color="#c3c300"/><stop offset="0.4" stop-color="#b4b400"/><stop offset="0.66" stop-color="#7c7c00"/><stop offset="0.86" stop-color="#363600"/><stop offset="1" stop-color="#141400"/></linearGradient><linearGradient id="gTB2" gradientUnits="userSpaceOnUse" x1="515.0" y1="107.0" x2="511.5" y2="130.4"><stop offset="0" stop-color="#c0c000"/><stop offset="0.4" stop-color="#b1b100"/><stop offset="0.66" stop-color="#7c7c00"/><stop offset="0.86" stop-color="#363600"/><stop offset="1" stop-color="#141400"/></linearGradient><linearGradient id="gTB3" gradientUnits="userSpaceOnUse" x1="545.0" y1="111.7" x2="541.7" y2="134.0"><stop offset="0" stop-color="#bdbd00"/><stop offset="0.4" stop-color="#aeae00"/><stop offset="0.66" stop-color="#7c7c00"/><stop offset="0.86" stop-color="#363600"/><stop offset="1" stop-color="#141400"/></linearGradient><linearGradient id="gTB4" gradientUnits="userSpaceOnUse" x1="575.0" y1="116.4" x2="571.9" y2="137.6"><stop offset="0" stop-color="#baba00"/><stop offset="0.4" stop-color="#abab00"/><stop offset="0.66" stop-color="#7c7c00"/><stop offset="0.86" stop-color="#363600"/><stop offset="1" stop-color="#141400"/></linearGradient><linearGradient id="gTB5" gradientUnits="userSpaceOnUse" x1="605.0" y1="121.1" x2="602.0" y2="141.2"><stop offset="0" stop-color="#b7b700"/><stop offset="0.4" stop-color="#a7a700"/><stop offset="0.66" stop-color="#7c7c00"/><stop offset="0.86" stop-color="#363600"/><stop offset="1" stop-color="#141400"/></linearGradient><linearGradient id="gTB6" gradientUnits="userSpaceOnUse" x1="635.0" y1="125.8" x2="632.2" y2="144.9"><stop offset="0" stop-color="#b4b400"/><stop offset="0.4" stop-color="#a4a400"/><stop offset="0.66" stop-color="#7c7c00"/><stop offset="0.86" stop-color="#363600"/><stop offset="1" stop-color="#141400"/></linearGradient><linearGradient id="gTB7" gradientUnits="userSpaceOnUse" x1="665.0" y1="130.5" x2="662.4" y2="148.5"><stop offset="0" stop-color="#b1b100"/><stop offset="0.4" stop-color="#a1a100"/><stop offset="0.66" stop-color="#7c7c00"/><stop offset="0.86" stop-color="#363600"/><stop offset="1" stop-color="#141400"/></linearGradient><linearGradient id="gTB8" gradientUnits="userSpaceOnUse" x1="692.5" y1="134.9" x2="690.0" y2="151.8"><stop offset="0" stop-color="#afaf00"/><stop offset="0.4" stop-color="#9e9e00"/><stop offset="0.66" stop-color="#7c7c00"/><stop offset="0.86" stop-color="#363600"/><stop offset="1" stop-color="#141400"/></linearGradient><linearGradient id="gTB9" gradientUnits="userSpaceOnUse" x1="717.5" y1="138.8" x2="715.1" y2="154.8"><stop offset="0" stop-color="#acac00"/><stop offset="0.4" stop-color="#9b9b00"/><stop offset="0.66" stop-color="#7c7c00"/><stop offset="0.86" stop-color="#363600"/><stop offset="1" stop-color="#141400"/></linearGradient><linearGradient id="gTB10" gradientUnits="userSpaceOnUse" x1="743.0" y1="142.8" x2="740.8" y2="157.8"><stop offset="0" stop-color="#aaaa00"/><stop offset="0.4" stop-color="#989800"/><stop offset="0.66" stop-color="#7c7c00"/><stop offset="0.86" stop-color="#363600"/><stop offset="1" stop-color="#141400"/></linearGradient><linearGradient id="gTBtip" gradientUnits="userSpaceOnUse" x1="770" y1="146" x2="768" y2="158"><stop offset="0" stop-color="#808000"/><stop offset="0.5" stop-color="#4a4a00"/><stop offset="1" stop-color="#1c1c00"/></linearGradient><linearGradient id="gYS0" gradientUnits="userSpaceOnUse" x1="1344.9" y1="241.3" x2="1350.8" y2="227.3"><stop offset="0" stop-color="#181800" stop-opacity="1"/><stop offset="0.15" stop-color="#383800" stop-opacity="0.92"/><stop offset="0.4" stop-color="#787800" stop-opacity="0.62"/><stop offset="0.7" stop-color="#a8a800" stop-opacity="0.28"/><stop offset="1" stop-color="#c8c800" stop-opacity="0"/></linearGradient><linearGradient id="gYS1" gradientUnits="userSpaceOnUse" x1="1372.7" y1="253.1" x2="1380.3" y2="235.2"><stop offset="0" stop-color="#181800" stop-opacity="1"/><stop offset="0.15" stop-color="#383800" stop-opacity="0.92"/><stop offset="0.4" stop-color="#787800" stop-opacity="0.62"/><stop offset="0.7" stop-color="#a8a800" stop-opacity="0.28"/><stop offset="1" stop-color="#c8c800" stop-opacity="0"/></linearGradient><linearGradient id="gYS2" gradientUnits="userSpaceOnUse" x1="1400.5" y1="265.0" x2="1409.7" y2="243.2"><stop offset="0" stop-color="#181800" stop-opacity="1"/><stop offset="0.15" stop-color="#383800" stop-opacity="0.92"/><stop offset="0.4" stop-color="#787800" stop-opacity="0.62"/><stop offset="0.7" stop-color="#a8a800" stop-opacity="0.28"/><stop offset="1" stop-color="#c8c800" stop-opacity="0"/></linearGradient><linearGradient id="gYS3" gradientUnits="userSpaceOnUse" x1="1428.3" y1="276.8" x2="1439.2" y2="251.1"><stop offset="0" stop-color="#181800" stop-opacity="1"/><stop offset="0.15" stop-color="#383800" stop-opacity="0.92"/><stop offset="0.4" stop-color="#787800" stop-opacity="0.62"/><stop offset="0.7" stop-color="#a8a800" stop-opacity="0.28"/><stop offset="1" stop-color="#c8c800" stop-opacity="0"/></linearGradient><linearGradient id="gYS4" gradientUnits="userSpaceOnUse" x1="1456.1" y1="288.6" x2="1468.7" y2="259.0"><stop offset="0" stop-color="#181800" stop-opacity="1"/><stop offset="0.15" stop-color="#383800" stop-opacity="0.92"/><stop offset="0.4" stop-color="#787800" stop-opacity="0.62"/><stop offset="0.7" stop-color="#a8a800" stop-opacity="0.28"/><stop offset="1" stop-color="#c8c800" stop-opacity="0"/></linearGradient><linearGradient id="gYS5" gradientUnits="userSpaceOnUse" x1="1483.9" y1="300.4" x2="1498.2" y2="266.9"><stop offset="0" stop-color="#181800" stop-opacity="1"/><stop offset="0.15" stop-color="#383800" stop-opacity="0.92"/><stop offset="0.4" stop-color="#787800" stop-opacity="0.62"/><stop offset="0.7" stop-color="#a8a800" stop-opacity="0.28"/><stop offset="1" stop-color="#c8c800" stop-opacity="0"/></linearGradient><linearGradient id="gYS6" gradientUnits="userSpaceOnUse" x1="1511.7" y1="312.3" x2="1527.6" y2="274.8"><stop offset="0" stop-color="#181800" stop-opacity="1"/><stop offset="0.15" stop-color="#383800" stop-opacity="0.92"/><stop offset="0.4" stop-color="#787800" stop-opacity="0.62"/><stop offset="0.7" stop-color="#a8a800" stop-opacity="0.28"/><stop offset="1" stop-color="#c8c800" stop-opacity="0"/></linearGradient><linearGradient id="gYS7" gradientUnits="userSpaceOnUse" x1="1539.5" y1="324.1" x2="1557.1" y2="282.7"><stop offset="0" stop-color="#181800" stop-opacity="1"/><stop offset="0.15" stop-color="#383800" stop-opacity="0.92"/><stop offset="0.4" stop-color="#787800" stop-opacity="0.62"/><stop offset="0.7" stop-color="#a8a800" stop-opacity="0.28"/><stop offset="1" stop-color="#c8c800" stop-opacity="0"/></linearGradient><linearGradient id="gYSa" gradientUnits="userSpaceOnUse" x1="1318" y1="218" x2="1327.7" y2="211"><stop offset="0" stop-color="#181800" stop-opacity="1"/><stop offset="0.15" stop-color="#383800" stop-opacity="0.92"/><stop offset="0.4" stop-color="#787800" stop-opacity="0.62"/><stop offset="0.7" stop-color="#a8a800" stop-opacity="0.28"/><stop offset="1" stop-color="#c8c800" stop-opacity="0"/></linearGradient><linearGradient id="gH" gradientUnits="userSpaceOnUse" x1="960" y1="235" x2="1000" y2="300"><stop offset="0" stop-color="#1e1e1e"/><stop offset="0.45" stop-color="#2c2c2c"/><stop offset="1" stop-color="#505050"/></linearGradient><linearGradient id="gOlDark" gradientUnits="userSpaceOnUse" x1="1400" y1="330" x2="1470" y2="300"><stop offset="0" stop-color="#2e2e00" stop-opacity="0"/><stop offset="1" stop-color="#2a2a00" stop-opacity="0.9"/></linearGradient></defs><rect x="436" y="104" width="1117" height="751" fill="url(#gMain)"/><polygon points="436.0,255.0 590.0,257.5 756.0,254.0 835.5,252.0 987.6,233.0 1230.0,300.0 1230.0,480.0 436.0,480.0" fill="url(#gTopShade)" /><rect x="500" y="250" width="700" height="190" fill="url(#gTopShade2)" mask="url(#mk2)"/><rect x="765" y="250" width="435" height="190" fill="url(#gTopShade3)" mask="url(#mk3)"/><polygon points="980.0,540.0 1110.0,540.0 1112.8,682.9 1204.5,654.0 1208.3,855.0 980.0,855.0" fill="url(#gLowR)" /><polygon points="436.0,104.0 1000.0,104.0 1000.0,236.0 987.6,235.2 835.5,254.0 756.0,256.0 590.0,259.4 436.0,257.0" fill="#1e1e1e" /><polygon points="495.6,104.0 751.0,104.0 799.7,113.9 832.5,139.8 786.8,151.7 756.0,144.8" fill="url(#gTopGrey)" /><polygon points="435.7,104.0 470.3,104.0 470.3,125.6 435.7,121.5" fill="url(#gTB0)" /><polygon points="469.7,104.0 500.3,104.7 500.3,129.1 469.7,125.6" fill="url(#gTB1)" /><polygon points="499.7,104.7 530.3,109.4 530.3,132.7 499.7,129.1" fill="url(#gTB2)" /><polygon points="529.7,109.4 560.3,114.1 560.3,136.3 529.7,132.7" fill="url(#gTB3)" /><polygon points="559.7,114.1 590.3,118.8 590.3,139.9 559.7,136.3" fill="url(#gTB4)" /><polygon points="589.7,118.8 620.3,123.5 620.3,143.5 589.7,139.9" fill="url(#gTB5)" /><polygon points="619.7,123.5 650.3,128.2 650.3,147.1 619.7,143.5" fill="url(#gTB6)" /><polygon points="649.7,128.2 680.3,132.9 680.3,150.6 649.7,147.1" fill="url(#gTB7)" /><polygon points="679.7,132.9 705.3,136.8 705.3,153.6 679.7,150.6" fill="url(#gTB8)" /><polygon points="704.7,136.8 730.3,140.7 730.3,156.6 704.7,153.6" fill="url(#gTB9)" /><polygon points="729.7,140.7 756.3,144.8 756.3,159.7 729.7,156.6" fill="url(#gTB10)" /><polygon points="755.7,144.8 786.8,151.7 755.7,159.7" fill="url(#gTBtip)" /><polygon points="436.0,145.7 665.0,162.0 595.0,167.2 436.0,163.6" fill="#03172b" /><polygon points="436.0,163.6 595.0,167.2 756.0,159.7 786.8,151.7 832.5,139.8 829.6,180.5 788.8,191.5 756.0,199.4 592.0,207.0 436.0,202.8" fill="url(#gBand4)" /><polygon points="436.0,202.8 592.0,207.0 756.0,199.4 788.8,191.5 805.7,191.5 810.7,211.4 828.6,220.3 794.8,222.9 785.8,219.3 756.0,221.3 710.4,220.9 656.7,231.2 591.0,237.0 436.0,234.2" fill="url(#gGreyBand)" /><polygon points="436.0,202.8 592.0,207.0 756.0,199.4 788.8,191.5 805.7,191.5 810.7,211.4 828.6,220.3 794.8,222.9 785.8,219.3 756.0,221.3 710.4,220.9 656.7,231.2 591.0,237.0 436.0,234.2" fill="url(#gGreyBandR)" /><polygon points="436.0,234.2 591.0,237.0 590.0,259.4 436.0,257.0" fill="#1e1e00" /><polygon points="656.7,231.2 710.4,220.9 756.0,221.3 785.8,219.3 841.5,241.2 799.7,249.1 756.0,244.2" fill="#3a3a00" /><polygon points="751.0,104.0 1553.0,104.0 1553.0,329.8 1493.0,304.0 1437.4,281.9 1336.0,238.2 1330.5,235.2 1297.7,189.9 1076.0,134.8 1044.3,126.9 960.8,146.7 817.6,126.9 799.7,113.9" fill="#c8c800" /><polygon points="1330.5,235.2 1359.2,247.4 1366.0,231.4 1335.6,223.2" fill="url(#gYS0)" /><polygon points="1358.3,247.0 1387.0,259.2 1395.5,239.3 1365.1,231.2" fill="url(#gYS1)" /><polygon points="1386.1,258.8 1414.8,271.1 1424.9,247.2 1394.5,239.1" fill="url(#gYS2)" /><polygon points="1413.9,270.7 1442.6,282.9 1454.4,255.2 1424.0,247.0" fill="url(#gYS3)" /><polygon points="1441.8,282.5 1470.5,294.7 1483.9,263.1 1453.5,254.9" fill="url(#gYS4)" /><polygon points="1469.6,294.3 1498.3,306.5 1513.4,271.0 1483.0,262.8" fill="url(#gYS5)" /><polygon points="1497.4,306.1 1526.1,318.4 1542.8,278.9 1512.4,270.7" fill="url(#gYS6)" /><polygon points="1525.2,318.0 1553.9,330.2 1572.3,286.8 1541.9,278.6" fill="url(#gYS7)" /><polygon points="1303.0,197.0 1330.5,235.2 1335.6,223.2" fill="url(#gYSa)" /><polygon points="960.8,146.7 1044.3,126.9 1076.0,134.8 1297.7,189.9 1330.5,235.2 1396.0,288.0 1409.6,304.0 1469.2,350.7 1532.8,504.0 1542.8,525.5 1535.9,662.0 1462.8,855.0 1208.3,855.0 1204.5,654.0 1112.8,682.9 1109.8,662.0 1097.5,526.0 1091.9,480.5 1086.9,427.8 983.5,336.4 1019.4,327.5 968.6,322.4 946.9,304.0 902.1,263.0 839.5,255.1 875.3,254.1 987.6,235.2 828.6,220.3 829.6,215.3 809.7,200.4 823.6,195.5 865.3,183.5 946.9,150.0" fill="url(#gOlive)" /><polygon points="829.6,215.3 903.1,201.4 1020.4,187.5 1030.4,182.5 1125.7,179.5 1168.4,191.5 987.6,235.2 828.6,220.3" fill="#1e1e1e" /><polygon points="828.6,220.3 987.6,235.2 835.5,254.0 799.7,249.1 841.5,241.2 794.8,222.9" fill="#1e1e1e" /><polygon points="1168.4,191.5 1209.0,196.5 1255.0,253.0" fill="url(#gWedge)" /><polygon points="839.5,255.1 875.3,254.1 987.6,235.2 1098.8,294.6 1033.2,301.6 875.3,254.1" fill="url(#gH)" /><polygon points="968.6,322.4 1019.4,327.5 983.5,336.4" fill="#6a6a6a" /><polygon points="1087.9,321.9 1121.7,309.0 1135.6,314.5 1178.3,415.3 1120.7,345.7" fill="url(#gGreyWedge)" /><polygon points="1330.5,235.2 1336.0,238.2 1437.4,281.9 1493.0,304.0 1553.0,329.8 1553.0,510.0 1542.8,525.5 1532.8,504.0 1469.2,350.7 1409.6,304.0 1396.0,288.0" fill="url(#gRightGrey)" /><polygon points="1469.2,350.7 1553.0,380.0 1553.0,510.0 1542.8,525.5 1532.8,504.0" fill="url(#gRightGreyD)" /><polygon points="1542.8,525.5 1553.0,510.0 1553.0,855.0 1462.8,855.0 1535.9,662.0" fill="url(#gBRyellow)" /><polygon points="1330.5,235.2 1396.0,288.0 1409.6,304.0 1469.2,350.7 1500.0,425.0 1439.0,395.5 1388.7,321.9 1352.0,270.0" fill="url(#gOlDark)" /><polygon points="1305.5,290.4 1377.0,306.2 1389.3,323.4 1332.5,313.6 1316.3,297.3" fill="#2c2c00" /><polygon points="582.7,439.8 756.0,452.1 910.0,463.0 1076.0,480.0 1091.9,480.5 1097.5,526.0 1100.0,554.3 1018.4,546.7 756.0,522.6 643.4,512.3 631.8,855.0 568.2,855.0" fill="url(#gNavy)" /><polyline points="495.6,104.0 756.0,144.8 786.8,151.7 832.5,139.8 799.7,113.9" fill="none" stroke="#ff0000" stroke-width="1.5" stroke-linejoin="round"/><polyline points="436.0,121.5 756.0,159.7 786.8,151.7" fill="none" stroke="#ff0000" stroke-width="1.5" stroke-linejoin="round"/><polyline points="436.0,130.0 560.0,142.0 700.0,152.0 760.0,158.0" fill="none" stroke="#ff0000" stroke-width="1.5" stroke-linejoin="round"/><polyline points="436.0,145.7 665.0,162.0" fill="none" stroke="#ff0000" stroke-width="1.5" stroke-linejoin="round"/><polyline points="540.0,135.0 541.5,141.5 700.0,160.0" fill="none" stroke="#ff0000" stroke-width="1.5" stroke-linejoin="round"/><polyline points="566.0,144.5 690.0,146.0 735.0,156.0" fill="none" stroke="#ff0000" stroke-width="1.5" stroke-linejoin="round"/><polyline points="436.0,163.6 595.0,167.2 756.0,159.7" fill="none" stroke="#ff0000" stroke-width="1.5" stroke-linejoin="round"/><polyline points="436.0,202.8 592.0,207.0 756.0,199.4 788.8,191.5 829.6,180.5" fill="none" stroke="#ff0000" stroke-width="1.5" stroke-linejoin="round"/><polyline points="436.0,234.2 591.0,237.0 656.7,231.2 710.4,220.9" fill="none" stroke="#ff0000" stroke-width="1.5" stroke-linejoin="round"/><polyline points="656.7,231.2 756.0,244.2 810.0,250.5" fill="none" stroke="#ff0000" stroke-width="1.5" stroke-linejoin="round"/><polyline points="436.0,257.0 590.0,259.4 756.0,256.0 835.5,254.0 987.6,235.2" fill="none" stroke="#ff0000" stroke-width="1.5" stroke-linejoin="round"/><polyline points="595.0,167.2 592.0,207.0 591.0,237.0 590.0,259.4 588.1,304.0 582.7,439.8 568.2,855.0" fill="none" stroke="#ff0000" stroke-width="1.5" stroke-linejoin="round"/><polyline points="436.0,424.3 582.7,439.8 756.0,452.1 910.0,463.0 1076.0,480.0 1091.9,480.5" fill="none" stroke="#ff0000" stroke-width="1.5" stroke-linejoin="round"/><polyline points="631.8,855.0 643.4,512.3 756.0,522.6 1018.4,546.7" fill="none" stroke="#ff0000" stroke-width="1.5" stroke-linejoin="round"/><polyline points="799.7,113.9 798.2,148.7" fill="none" stroke="#ff0000" stroke-width="1.5" stroke-linejoin="round"/><polyline points="799.7,113.9 817.6,126.9 960.8,146.7 1044.3,126.9" fill="none" stroke="#ff0000" stroke-width="1.5" stroke-linejoin="round"/><polyline points="895.0,104.0 1076.0,127.9 1336.0,174.0 1553.0,223.9" fill="none" stroke="#ff0000" stroke-width="1.5" stroke-linejoin="round"/><polyline points="1076.0,134.8 1297.7,189.9 1330.5,235.2 1374.0,304.0 1388.7,321.9 1439.0,395.5 1443.4,481.0" fill="none" stroke="#ff0000" stroke-width="1.5" stroke-linejoin="round"/><polyline points="1330.5,235.2 1437.4,281.9 1493.0,304.0 1553.0,329.8" fill="none" stroke="#ff0000" stroke-width="1.5" stroke-linejoin="round"/><polyline points="1336.4,246.1 1396.0,288.0 1409.6,304.0 1469.2,350.7 1532.8,504.0 1542.8,525.5" fill="none" stroke="#ff0000" stroke-width="1.5" stroke-linejoin="round"/><polyline points="1446.0,196.0 1455.0,249.0 1451.0,279.0 1438.0,282.5" fill="none" stroke="#ff0000" stroke-width="1.5" stroke-linejoin="round"/><polyline points="832.5,139.8 829.6,180.5 788.8,191.5 768.0,194.0" fill="none" stroke="#ff0000" stroke-width="1.5" stroke-linejoin="round"/><polyline points="829.6,180.5 865.3,183.5 946.9,150.0 960.8,146.7" fill="none" stroke="#ff0000" stroke-width="1.5" stroke-linejoin="round"/><polyline points="805.7,191.5 810.7,211.4 828.6,220.3" fill="none" stroke="#ff0000" stroke-width="1.5" stroke-linejoin="round"/><polyline points="822.6,183.5 824.0,195.5" fill="none" stroke="#ff0000" stroke-width="1.5" stroke-linejoin="round"/><polyline points="809.7,200.4 823.6,195.5 865.3,183.5" fill="none" stroke="#ff0000" stroke-width="1.5" stroke-linejoin="round"/><polyline points="794.8,222.9 828.6,220.3 987.6,235.2 1076.0,215.3 1168.4,191.5" fill="none" stroke="#ff0000" stroke-width="1.5" stroke-linejoin="round"/><polyline points="1020.4,187.5 1076.0,189.5 1168.4,191.5 1211.0,195.5" fill="none" stroke="#ff0000" stroke-width="1.5" stroke-linejoin="round"/><polyline points="1105.8,175.5 1168.4,191.0 1209.0,196.5" fill="none" stroke="#ff0000" stroke-width="1.5" stroke-linejoin="round"/><polyline points="1168.4,191.5 1264.9,261.0" fill="none" stroke="#ff0000" stroke-width="1.5" stroke-linejoin="round"/><polyline points="987.6,235.2 1098.8,294.6" fill="none" stroke="#ff0000" stroke-width="1.5" stroke-linejoin="round"/><polyline points="839.5,255.1 902.1,263.0 946.9,304.0 968.7,322.3" fill="none" stroke="#ff0000" stroke-width="1.5" stroke-linejoin="round"/><polyline points="983.5,336.4 1086.9,427.8 1091.9,480.5 1097.5,526.0" fill="none" stroke="#ff0000" stroke-width="1.5" stroke-linejoin="round"/><polyline points="1121.7,307.0 1134.6,314.0 1184.3,431.2" fill="none" stroke="#ff0000" stroke-width="1.5" stroke-linejoin="round"/><polyline points="1305.5,290.4 1316.3,297.3 1352.3,413.3" fill="none" stroke="#ff0000" stroke-width="1.5" stroke-linejoin="round"/><polyline points="1201.2,471.0 1287.7,466.0 1372.2,479.9 1471.2,504.0 1542.8,525.5" fill="none" stroke="#ff0000" stroke-width="1.5" stroke-linejoin="round"/><polyline points="1201.2,471.0 1202.0,526.0" fill="none" stroke="#ff0000" stroke-width="1.5" stroke-linejoin="round"/><polyline points="1204.5,654.0 1208.3,855.0" fill="none" stroke="#ff0000" stroke-width="1.5" stroke-linejoin="round"/><polyline points="1109.8,662.0 1112.8,682.9 1204.5,654.0" fill="none" stroke="#ff0000" stroke-width="1.5" stroke-linejoin="round"/><polyline points="1381.7,662.0 1453.3,670.0 1453.0,662.0" fill="none" stroke="#ff0000" stroke-width="1.5" stroke-linejoin="round"/><polyline points="1552.7,510.0 1542.8,525.5 1538.0,600.0 1535.9,662.0 1518.9,704.0 1462.8,855.0" fill="none" stroke="#ff0000" stroke-width="1.5" stroke-linejoin="round"/><path d="M538.0 141.5H545.0M541.5 138.0V145.0" stroke="#ff50ff" stroke-width="1" fill="none"/><path d="M560.5 144.5H567.5M564.0 141.0V148.0" stroke="#ff50ff" stroke-width="1" fill="none"/><path d="M591.5 167.2H598.5M595.0 163.7V170.7" stroke="#ff50ff" stroke-width="1" fill="none"/><path d="M588.5 207.0H595.5M592.0 203.5V210.5" stroke="#ff50ff" stroke-width="1" fill="none"/><path d="M587.5 237.0H594.5M591.0 233.5V240.5" stroke="#ff50ff" stroke-width="1" fill="none"/><path d="M586.5 259.4H593.5M590.0 255.9V262.9" stroke="#ff50ff" stroke-width="1" fill="none"/><path d="M653.2 231.2H660.2M656.7 227.7V234.7" stroke="#ff50ff" stroke-width="1" fill="none"/><path d="M796.2 113.9H803.2M799.7 110.4V117.4" stroke="#ff50ff" stroke-width="1" fill="none"/><path d="M802.2 191.5H809.2M805.7 188.0V195.0" stroke="#ff50ff" stroke-width="1" fill="none"/><path d="M825.1 220.3H832.1M828.6 216.8V223.8" stroke="#ff50ff" stroke-width="1" fill="none"/><path d="M984.1 235.2H991.1M987.6 231.7V238.7" stroke="#ff50ff" stroke-width="1" fill="none"/><path d="M1040.8 126.9H1047.8M1044.3 123.4V130.4" stroke="#ff50ff" stroke-width="1" fill="none"/><path d="M1164.9 191.5H1171.9M1168.4 188.0V195.0" stroke="#ff50ff" stroke-width="1" fill="none"/><path d="M1178.8 190.0H1185.8M1182.3 186.5V193.5" stroke="#ff50ff" stroke-width="1" fill="none"/><path d="M579.2 439.8H586.2M582.7 436.3V443.3" stroke="#ff50ff" stroke-width="1" fill="none"/><path d="M689.0 448.0H696.0M692.5 444.5V451.5" stroke="#ff50ff" stroke-width="1" fill="none"/><path d="M906.5 463.0H913.5M910.0 459.5V466.5" stroke="#ff50ff" stroke-width="1" fill="none"/><path d="M639.9 512.3H646.9M643.4 508.8V515.8" stroke="#ff50ff" stroke-width="1" fill="none"/><path d="M683.0 516.5H690.0M686.5 513.0V520.0" stroke="#ff50ff" stroke-width="1" fill="none"/><path d="M774.5 524.5H781.5M778.0 521.0V528.0" stroke="#ff50ff" stroke-width="1" fill="none"/><path d="M1084.0 428.9H1091.0M1087.5 425.4V432.4" stroke="#ff50ff" stroke-width="1" fill="none"/><path d="M1197.7 471.0H1204.7M1201.2 467.5V474.5" stroke="#ff50ff" stroke-width="1" fill="none"/><path d="M1368.7 479.9H1375.7M1372.2 476.4V483.4" stroke="#ff50ff" stroke-width="1" fill="none"/><path d="M1109.3 682.9H1116.3M1112.8 679.4V686.4" stroke="#ff50ff" stroke-width="1" fill="none"/><path d="M1449.8 670.0H1456.8M1453.3 666.5V673.5" stroke="#ff50ff" stroke-width="1" fill="none"/><path d="M1442.5 196.0H1449.5M1446.0 192.5V199.5" stroke="#ff50ff" stroke-width="1" fill="none"/><path d="M1434.5 282.5H1441.5M1438.0 279.0V286.0" stroke="#ff50ff" stroke-width="1" fill="none"/><g><polygon points="1436.2,213 1439.6,213.2 1444,150 1441,150" fill="#1a8c9a"/><polygon points="1436,150.5 1449.5,151 1443.6,133" fill="#167c8a"/><polygon points="1431.5,214 1372,210.3 1372,213 1431.5,218.5" fill="#a80c0c"/><polygon points="1373,205 1373,218 1356,210" fill="#7a0606"/><rect x="1431" y="213" width="11" height="12" fill="#10e810"/><rect x="1440.5" y="214" width="4" height="11" fill="#7a7a20"/><line x1="1431" y1="220" x2="1420" y2="223" stroke="#1a7a1a" stroke-width="3"/><circle cx="1416.5" cy="224" r="6.3" fill="#10a010"/><circle cx="1415" cy="222" r="2.6" fill="#30c830"/><text x="1444" y="126" font-family="Liberation Serif,serif" font-size="13" fill="#1a9aa6">Z</text><text x="1349" y="207" font-family="Liberation Serif,serif" font-size="13" font-weight="bold" fill="#c81414">X</text><text x="1411" y="217" font-family="Liberation Serif,serif" font-size="11" fill="#20d020">Y</text></g><text x="439" y="119" font-family="Liberation Mono,monospace" font-size="15" fill="#ffffff" xml:space="preserve" textLength="387" lengthAdjust="spacing">0:maozi(1).igs,  Current Part: maozi(1).igs</text><rect x="443" y="795" width="3" height="1" fill="#fff"/><rect x="443" y="805" width="1" height="1" fill="#fff"/></svg>
<div class="a" style="left:1018px;top:526px;width:538px;height:136px;background:#f9f9f9;border:1px solid #c9c9c9;border-radius:8px;box-shadow:0 6px 18px rgba(0,0,0,0.28),0 0 2px rgba(0,0,0,0.3)"></div><div class="a" style="left:1019px;top:527px;width:536px;height:37px;background:#f3f3f3;border-radius:7px 7px 0 0;border-bottom:1px solid #e8e8e8"></div><svg class="a" style="left:1027px;top:534.5px" width="20" height="20" viewBox="0 0 20 20"><rect width="20" height="20" fill="#0b5cad"/><path d="M4.3 2.8h4.2c3 0 4.6 2 4.6 5 0 3.200-1.800 4.800-4.600 4.800H4.300z" fill="none" stroke="#fff" stroke-width="1.3"/><path d="M8 5.5h3.600c2 0 3.200 1 3.200 2.800 0 1.400-.8 2.300-2 2.600 1.600.3 2.600 1.300 2.600 3 0 2-1.500 3.200-3.800 3.200H8z" fill="none" stroke="#fff" stroke-width="1.3"/><path d="M8.200 12.500L10.300 6.800l2.300 5.700z" fill="#0b5cad" stroke="#fff" stroke-width="1.1"/></svg><span class="t sans" style="left:1052px;top:534.5px;font-size:14.8px;line-height:20px;color:#1a1a1a;letter-spacing:-0.1px">Param. Input</span><svg class="a" style="left:1529px;top:538px" width="12" height="12" viewBox="0 0 12 12"><path d="M1 1L11 11M11 1L1 11" stroke="#222" stroke-width="1.3" fill="none"/></svg><span class="t m18" style="left:1024px;top:573px;">Please specify the u par (0-1) or ~ distance (0-57.7928) :</span><div class="a" style="left:1024px;top:594px;width:523px;height:22px;background:#fff;border:1px solid #ececec;border-bottom:1.5px solid #7a7a7a;border-radius:2px"></div><span class="t m18" style="left:1028px;top:596.5px;">1/3</span><div class="a" style="left:1022px;top:623px;width:530px;height:1px;background:#9a9a9a"></div><div class="a" style="left:1023px;top:629.5px;width:69px;height:25px;background:#fdfdfd;border:1px dotted #111;border-radius:2px;box-shadow:inset 0 0 0 1px #dcdcdc"></div><span class="t m18" style="left:1048px;top:634px;">OK</span><div class="a" style="left:1479.5px;top:629.5px;width:69px;height:25px;background:#fdfdfd;border:1px solid #cfcfcf;border-radius:4px"></div><span class="t m18" style="left:1487px;top:634px;">Cancel</span>
</div></body></html>
